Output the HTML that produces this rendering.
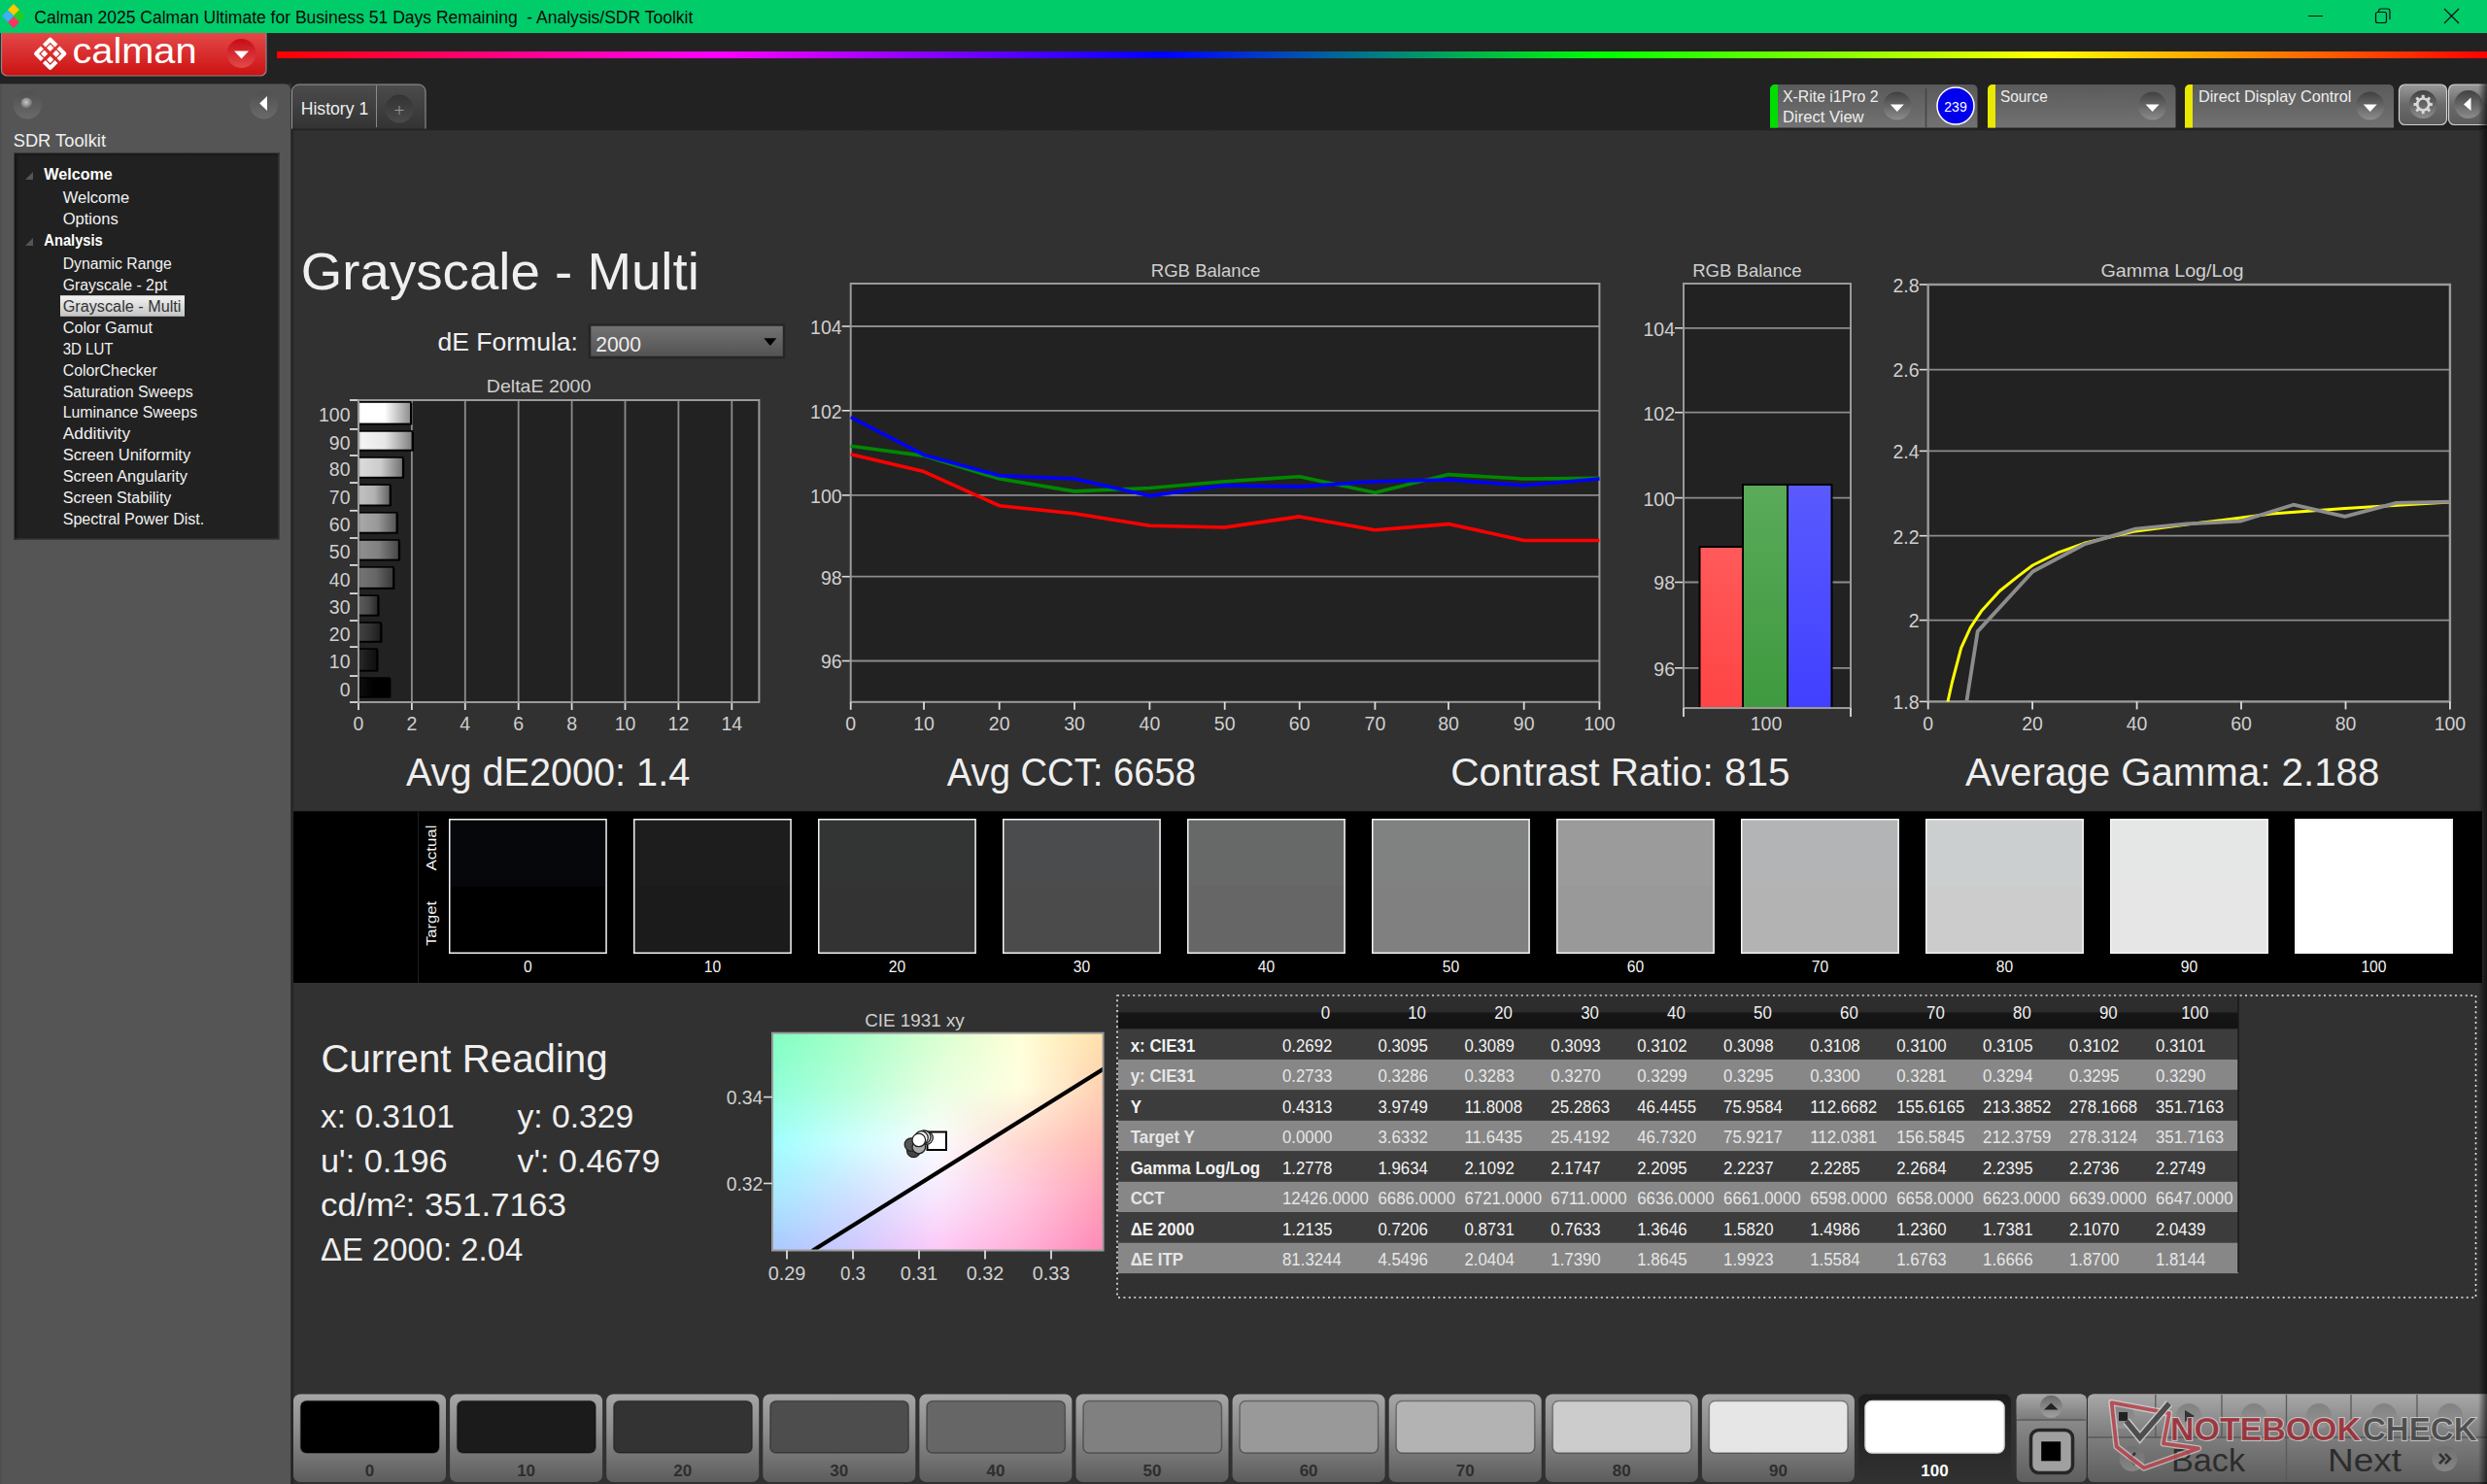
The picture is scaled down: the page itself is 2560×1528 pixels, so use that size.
<!DOCTYPE html>
<html><head><meta charset="utf-8"><title>Calman</title>
<style>html,body{margin:0;padding:0;background:#313131;overflow:hidden;width:2560px;height:1528px}
svg{display:block} text{font-family:"Liberation Sans", sans-serif}</style></head><body>
<svg width="2560" height="1528" viewBox="0 0 2560 1528">
<defs><linearGradient id="gRed" x1="0" y1="0" x2="0" y2="1"><stop offset="0" stop-color="#e44848"/><stop offset="1" stop-color="#cc1212"/></linearGradient><linearGradient id="gRedC" x1="0" y1="0" x2="0" y2="1"><stop offset="0" stop-color="#c60c18"/><stop offset="1" stop-color="#e24a4a"/></linearGradient><linearGradient id="gRain" gradientUnits="userSpaceOnUse" x1="285" y1="0" x2="2560" y2="0"><stop offset="0" stop-color="#ff0000"/><stop offset="0.2" stop-color="#ff00ff"/><stop offset="0.4" stop-color="#0000ff"/><stop offset="0.6" stop-color="#00ff00"/><stop offset="0.8" stop-color="#ffff00"/><stop offset="1" stop-color="#ff0000"/></linearGradient><linearGradient id="gTb" x1="0" y1="0" x2="0" y2="1"><stop offset="0" stop-color="#5a5a5a"/><stop offset="1" stop-color="#727272"/></linearGradient><radialGradient id="gDd" cx="0.5" cy="0.5" r="0.5"><stop offset="0" stop-color="#5c5c5c"/><stop offset="1" stop-color="#636363"/></radialGradient><linearGradient id="gDdc" x1="0" y1="0" x2="0" y2="1"><stop offset="0" stop-color="#404040"/><stop offset="1" stop-color="#8c8c8c"/></linearGradient><linearGradient id="gBtn" x1="0" y1="0" x2="0" y2="1"><stop offset="0" stop-color="#9a9a9a"/><stop offset="0.5" stop-color="#6a6a6a"/><stop offset="1" stop-color="#5a5a5a"/></linearGradient><radialGradient id="gBall" cx="0.45" cy="0.4" r="0.6"><stop offset="0" stop-color="#c8c8c8"/><stop offset="0.6" stop-color="#8a8a8a"/><stop offset="1" stop-color="#555"/></radialGradient><linearGradient id="gCirc" x1="0" y1="0" x2="0" y2="1"><stop offset="0" stop-color="#505050"/><stop offset="1" stop-color="#6a6a6a"/></linearGradient><linearGradient id="gTreeL" x1="0" y1="0" x2="1" y2="0"><stop offset="0" stop-color="#111"/><stop offset="1" stop-color="#212121"/></linearGradient><linearGradient id="gTreeT" x1="0" y1="0" x2="0" y2="1"><stop offset="0" stop-color="#111"/><stop offset="1" stop-color="#212121" stop-opacity="0"/></linearGradient><linearGradient id="gSel" x1="0" y1="0" x2="0" y2="1"><stop offset="0" stop-color="#f4f4f4"/><stop offset="1" stop-color="#c4c4c4"/></linearGradient><linearGradient id="gTab" x1="0" y1="0" x2="0" y2="1"><stop offset="0" stop-color="#4c4c4c"/><stop offset="1" stop-color="#333"/></linearGradient><linearGradient id="gPlus" x1="0" y1="0" x2="0" y2="1"><stop offset="0" stop-color="#333"/><stop offset="1" stop-color="#4a4a4a"/></linearGradient><linearGradient id="gShL" x1="0" y1="0" x2="1" y2="0"><stop offset="0" stop-color="#1e1e1e"/><stop offset="1" stop-color="#313131" stop-opacity="0"/></linearGradient><linearGradient id="gShT" x1="0" y1="0" x2="0" y2="1"><stop offset="0" stop-color="#1e1e1e"/><stop offset="1" stop-color="#313131" stop-opacity="0"/></linearGradient><linearGradient id="gRs" x1="0" y1="0" x2="1" y2="0"><stop offset="0" stop-color="#000" stop-opacity="0"/><stop offset="1" stop-color="#000" stop-opacity="0.62"/></linearGradient><linearGradient id="gDrop" x1="0" y1="0" x2="0" y2="1"><stop offset="0" stop-color="#737373"/><stop offset="1" stop-color="#525252"/></linearGradient><linearGradient id="gDb0" x1="0" y1="0" x2="1" y2="0"><stop offset="0" stop-color="rgb(0,0,0)"/><stop offset="0.06" stop-color="rgb(14,14,14)"/><stop offset="0.5" stop-color="rgb(0,0,0)"/><stop offset="1" stop-color="rgb(0,0,0)"/></linearGradient><linearGradient id="gDb10" x1="0" y1="0" x2="1" y2="0"><stop offset="0" stop-color="rgb(1,1,1)"/><stop offset="0.06" stop-color="rgb(40,40,40)"/><stop offset="0.5" stop-color="rgb(26,26,26)"/><stop offset="1" stop-color="rgb(14,14,14)"/></linearGradient><linearGradient id="gDb20" x1="0" y1="0" x2="1" y2="0"><stop offset="0" stop-color="rgb(26,26,26)"/><stop offset="0.06" stop-color="rgb(65,65,65)"/><stop offset="0.5" stop-color="rgb(51,51,51)"/><stop offset="1" stop-color="rgb(28,28,28)"/></linearGradient><linearGradient id="gDb30" x1="0" y1="0" x2="1" y2="0"><stop offset="0" stop-color="rgb(51,51,51)"/><stop offset="0.06" stop-color="rgb(90,90,90)"/><stop offset="0.5" stop-color="rgb(76,76,76)"/><stop offset="1" stop-color="rgb(41,41,41)"/></linearGradient><linearGradient id="gDb40" x1="0" y1="0" x2="1" y2="0"><stop offset="0" stop-color="rgb(77,77,77)"/><stop offset="0.06" stop-color="rgb(116,116,116)"/><stop offset="0.5" stop-color="rgb(102,102,102)"/><stop offset="1" stop-color="rgb(56,56,56)"/></linearGradient><linearGradient id="gDb50" x1="0" y1="0" x2="1" y2="0"><stop offset="0" stop-color="rgb(103,103,103)"/><stop offset="0.06" stop-color="rgb(142,142,142)"/><stop offset="0.5" stop-color="rgb(128,128,128)"/><stop offset="1" stop-color="rgb(70,70,70)"/></linearGradient><linearGradient id="gDb60" x1="0" y1="0" x2="1" y2="0"><stop offset="0" stop-color="rgb(128,128,128)"/><stop offset="0.06" stop-color="rgb(167,167,167)"/><stop offset="0.5" stop-color="rgb(153,153,153)"/><stop offset="1" stop-color="rgb(84,84,84)"/></linearGradient><linearGradient id="gDb70" x1="0" y1="0" x2="1" y2="0"><stop offset="0" stop-color="rgb(153,153,153)"/><stop offset="0.06" stop-color="rgb(192,192,192)"/><stop offset="0.5" stop-color="rgb(178,178,178)"/><stop offset="1" stop-color="rgb(97,97,97)"/></linearGradient><linearGradient id="gDb80" x1="0" y1="0" x2="1" y2="0"><stop offset="0" stop-color="rgb(179,179,179)"/><stop offset="0.06" stop-color="rgb(218,218,218)"/><stop offset="0.5" stop-color="rgb(204,204,204)"/><stop offset="1" stop-color="rgb(112,112,112)"/></linearGradient><linearGradient id="gDb90" x1="0" y1="0" x2="1" y2="0"><stop offset="0" stop-color="rgb(205,205,205)"/><stop offset="0.06" stop-color="rgb(244,244,244)"/><stop offset="0.5" stop-color="rgb(230,230,230)"/><stop offset="1" stop-color="rgb(126,126,126)"/></linearGradient><linearGradient id="gDb100" x1="0" y1="0" x2="1" y2="0"><stop offset="0" stop-color="rgb(230,230,230)"/><stop offset="0.06" stop-color="rgb(255,255,255)"/><stop offset="0.5" stop-color="rgb(255,255,255)"/><stop offset="1" stop-color="rgb(140,140,140)"/></linearGradient><linearGradient id="gMr" x1="0" y1="0" x2="0" y2="1"><stop offset="0" stop-color="#ff5a5a"/><stop offset="1" stop-color="#ff4444"/></linearGradient><linearGradient id="gMg" x1="0" y1="0" x2="0" y2="1"><stop offset="0" stop-color="#5aaa5a"/><stop offset="1" stop-color="#3e9a3e"/></linearGradient><linearGradient id="gMb" x1="0" y1="0" x2="0" y2="1"><stop offset="0" stop-color="#5a5aff"/><stop offset="1" stop-color="#4040ff"/></linearGradient><filter id="fBlur" x="-5%" y="-5%" width="110%" height="110%"><feGaussianBlur stdDeviation="5"/></filter><linearGradient id="gHdr" x1="0" y1="0" x2="0" y2="1"><stop offset="0" stop-color="#2e2e2e"/><stop offset="0.49" stop-color="#2c2c2c"/><stop offset="0.5" stop-color="#161616"/><stop offset="1" stop-color="#121212"/></linearGradient><linearGradient id="gBb" x1="0" y1="0" x2="0" y2="1"><stop offset="0" stop-color="#a6a6a6"/><stop offset="0.45" stop-color="#8a8a8a"/><stop offset="1" stop-color="#5c5c5c"/></linearGradient><linearGradient id="gSelB" x1="0" y1="0" x2="0" y2="1"><stop offset="0" stop-color="#1c1c1c"/><stop offset="1" stop-color="#313131"/></linearGradient><linearGradient id="gCb" x1="0" y1="0" x2="0" y2="1"><stop offset="0" stop-color="#a8a8a8"/><stop offset="1" stop-color="#7a7a7a"/></linearGradient><linearGradient id="gCb2" x1="0" y1="0" x2="0" y2="1"><stop offset="0" stop-color="#9c9c9c"/><stop offset="1" stop-color="#5e5e5e"/></linearGradient><linearGradient id="gIc" x1="0" y1="0" x2="0" y2="1"><stop offset="0" stop-color="#6a6a6a"/><stop offset="1" stop-color="#a0a0a0"/></linearGradient></defs>
<rect x="0" y="0" width="2560" height="1528" fill="#313131"/>
<rect x="0" y="0" width="2560" height="34" fill="#00cc6a"/>
<rect x="0" y="34" width="2560" height="52" fill="#222222"/>
<rect x="300" y="86" width="2260" height="47" fill="#222222"/>
<path d="M14 4 L20 10 L14 16 L8 10 Z" fill="#ffc800"/>
<path d="M8 10.5 L14 16.5 L8 22.5 L2 16.5 Z" fill="#3ab0ff"/>
<path d="M20 10.5 L26 16.5 L20 22.5 L14 16.5 Z" fill="#22cc22"/>
<path d="M14 17 L20 23 L14 29 L8 23 Z" fill="#ff3366"/>
<text x="35.3" y="23.8" font-size="17.5" fill="#0a0a0a" textLength="678.0" lengthAdjust="spacingAndGlyphs" xml:space="preserve">Calman 2025 Calman Ultimate for Business 51 Days Remaining  - Analysis/SDR Toolkit</text>
<line x1="2376" y1="16.5" x2="2391" y2="16.5" stroke="#111" stroke-width="1"/>
<rect x="2445.5" y="12.5" width="11" height="11" rx="2" fill="none" stroke="#111" stroke-width="1.2"/>
<path d="M2448.5 12.5 V11.5 a2.5 2.5 0 0 1 2.5 -2.5 H2457.5 a2.5 2.5 0 0 1 2.5 2.5 V20" fill="none" stroke="#111" stroke-width="1.2"/>
<path d="M2516 9 L2531 24 M2531 9 L2516 24" stroke="#111" stroke-width="1.2"/>
<path d="M1.5 34 H274 V72 a6 6 0 0 1 -6 6 H7.5 a6 6 0 0 1 -6 -6 Z" fill="url(#gRed)"/>
<path d="M1.5 34 V72 a6 6 0 0 0 6 6 H268 a6 6 0 0 0 6 -6 V34" fill="none" stroke="#8a8a8a" stroke-width="1.2"/>
<g transform="translate(51.7,55.3) rotate(45)"><path d="M-1.40 -10.30 L-10.30 -10.30 L-10.30 -1.40 M1.40 -10.30 L10.30 -10.30 L10.30 -1.40 M1.40 10.30 L10.30 10.30 L10.30 1.40 M-1.40 10.30 L-10.30 10.30 L-10.30 1.40" fill="none" stroke="#fff" stroke-width="4.2" stroke-linecap="butt" stroke-linejoin="round"/><g fill="#fff"><rect x="-6.9" y="-6.9" width="5.2" height="5.2" rx="0.6"/><rect x="1.7" y="-6.9" width="5.2" height="5.2" rx="0.6"/><rect x="-6.9" y="1.7" width="5.2" height="5.2" rx="0.6"/><rect x="1.7" y="1.7" width="5.2" height="5.2" rx="0.6"/></g></g>
<text x="74.5" y="65.3" font-size="37" fill="#fff" textLength="128.0" lengthAdjust="spacingAndGlyphs">calman</text>
<circle cx="248.5" cy="55" r="15" fill="url(#gRedC)"/>
<path d="M241 52.5 L256 52.5 L248.5 60.5 Z" fill="#fff"/>
<rect x="285" y="53" width="2275" height="7" fill="url(#gRain)"/>
<path d="M1822 131.5 V92 a5 5 0 0 1 5 -5 H2030.5 a5 5 0 0 1 5 5 V131.5 Z" fill="url(#gTb)"/>
<path d="M1822 131.5 V92 a5 5 0 0 1 5 -5 H1830 V131.5 Z" fill="#00dd00"/>
<text x="1835.0" y="104.8" font-size="16.5" fill="#eee" textLength="98.5" lengthAdjust="spacingAndGlyphs">X-Rite i1Pro 2</text>
<text x="1835.0" y="126.2" font-size="16.5" fill="#eee" textLength="83.6" lengthAdjust="spacingAndGlyphs">Direct View</text>
<circle cx="1952.8" cy="109" r="14.5" fill="url(#gDdc)"/>
<path d="M1945.8 107.5 L1959.8 107.5 L1952.8 115 Z" fill="#fff"/>
<line x1="1982.5" y1="91" x2="1982.5" y2="131" stroke="#444" stroke-width="1.5"/>
<circle cx="2013" cy="109" r="19" fill="#0000ee" stroke="#fff" stroke-width="1.5"/>
<text x="2013.0" y="114.8" font-size="14" fill="#fff" text-anchor="middle">239</text>
<path d="M2046 131.5 V92 a5 5 0 0 1 5 -5 H2234.5 a5 5 0 0 1 5 5 V131.5 Z" fill="url(#gTb)"/>
<path d="M2046 131.5 V92 a5 5 0 0 1 5 -5 H2054 V131.5 Z" fill="#e8e800"/>
<text x="2058.9" y="104.8" font-size="16.5" fill="#eee" textLength="48.9" lengthAdjust="spacingAndGlyphs">Source</text>
<circle cx="2215.6" cy="109" r="14.5" fill="url(#gDdc)"/>
<path d="M2208.6 107.5 L2222.6 107.5 L2215.6 115 Z" fill="#fff"/>
<path d="M2249 131.5 V92 a5 5 0 0 1 5 -5 H2459 a5 5 0 0 1 5 5 V131.5 Z" fill="url(#gTb)"/>
<path d="M2249 131.5 V92 a5 5 0 0 1 5 -5 H2257 V131.5 Z" fill="#e8e800"/>
<text x="2263.0" y="104.8" font-size="16.5" fill="#eee" textLength="157.4" lengthAdjust="spacingAndGlyphs">Direct Display Control</text>
<circle cx="2439.7" cy="109" r="14.5" fill="url(#gDdc)"/>
<path d="M2432.7 107.5 L2446.7 107.5 L2439.7 115 Z" fill="#fff"/>
<rect x="2469.5" y="87" width="49" height="41.5" rx="6" fill="url(#gBtn)" stroke="#d0d0d0" stroke-width="1.2"/>
<circle cx="2494.2" cy="107.5" r="14.5" fill="url(#gDdc)"/>
<g transform="translate(2494.2,107.5)" fill="#d8d8d8"><rect x="-1.5" y="-9.8" width="3" height="4" rx="0.8" transform="rotate(0)"/><rect x="-1.5" y="-9.8" width="3" height="4" rx="0.8" transform="rotate(45)"/><rect x="-1.5" y="-9.8" width="3" height="4" rx="0.8" transform="rotate(90)"/><rect x="-1.5" y="-9.8" width="3" height="4" rx="0.8" transform="rotate(135)"/><rect x="-1.5" y="-9.8" width="3" height="4" rx="0.8" transform="rotate(180)"/><rect x="-1.5" y="-9.8" width="3" height="4" rx="0.8" transform="rotate(225)"/><rect x="-1.5" y="-9.8" width="3" height="4" rx="0.8" transform="rotate(270)"/><rect x="-1.5" y="-9.8" width="3" height="4" rx="0.8" transform="rotate(315)"/><circle r="6.0" fill="none" stroke="#d8d8d8" stroke-width="2.7"/></g>
<rect x="2520.5" y="87" width="55" height="41.5" rx="6" fill="url(#gBtn)" stroke="#d0d0d0" stroke-width="1.2"/>
<circle cx="2540.8" cy="107.5" r="14.5" fill="url(#gDdc)"/>
<path d="M2536 107.5 L2543.5 100.5 L2543.5 114 Z" fill="#fff"/>
<path d="M0 1528 V86.5 H293 a6 6 0 0 1 6 6 V1528 Z" fill="#555555"/>
<line x1="1" y1="87" x2="1" y2="1528" stroke="#4a4a4a" stroke-width="1"/>
<circle cx="28.3" cy="108" r="14.5" fill="url(#gCirc)"/>
<circle cx="27.5" cy="106.5" r="6" fill="url(#gBall)"/>
<circle cx="271.6" cy="108" r="14.5" fill="url(#gCirc)"/>
<path d="M267.2 106.5 L275 99 L275 114 Z" fill="#fff"/>
<text x="13.7" y="151.1" font-size="18.2" fill="#f0f0f0" textLength="95.3" lengthAdjust="spacingAndGlyphs">SDR Toolkit</text>
<rect x="14" y="157" width="273.5" height="398.5" fill="#212121"/>
<rect x="14" y="157" width="6" height="398.5" fill="url(#gTreeL)"/>
<rect x="14" y="157" width="273.5" height="5" fill="url(#gTreeT)"/>
<rect x="14.5" y="157.5" width="272.5" height="397.5" fill="none" stroke="#3a3a3a" stroke-width="1"/>
<path d="M26 185 L34 185 L34 177 Z" fill="#555"/>
<path d="M26 253 L34 253 L34 245 Z" fill="#555"/>
<text x="45.3" y="185.1" font-size="16" fill="#fff" font-weight="bold" textLength="70.5" lengthAdjust="spacingAndGlyphs">Welcome</text>
<text x="64.7" y="209.0" font-size="16" fill="#f2f2f2" textLength="68.5" lengthAdjust="spacingAndGlyphs">Welcome</text>
<text x="64.7" y="231.0" font-size="16" fill="#f2f2f2" textLength="57.0" lengthAdjust="spacingAndGlyphs">Options</text>
<text x="45.3" y="253.0" font-size="16" fill="#fff" font-weight="bold" textLength="60.5" lengthAdjust="spacingAndGlyphs">Analysis</text>
<text x="64.7" y="277.2" font-size="16" fill="#f2f2f2" textLength="112.1" lengthAdjust="spacingAndGlyphs">Dynamic Range</text>
<text x="64.7" y="299.1" font-size="16" fill="#f2f2f2" textLength="107.4" lengthAdjust="spacingAndGlyphs">Grayscale - 2pt</text>
<rect x="62" y="304.2" width="128" height="21.6" fill="url(#gSel)"/>
<text x="64.7" y="321.0" font-size="16" fill="#333" textLength="121.8" lengthAdjust="spacingAndGlyphs">Grayscale - Multi</text>
<text x="64.7" y="342.8" font-size="16" fill="#f2f2f2" textLength="92.3" lengthAdjust="spacingAndGlyphs">Color Gamut</text>
<text x="64.7" y="364.7" font-size="16" fill="#f2f2f2" textLength="51.8" lengthAdjust="spacingAndGlyphs">3D LUT</text>
<text x="64.7" y="386.6" font-size="16" fill="#f2f2f2" textLength="97.0" lengthAdjust="spacingAndGlyphs">ColorChecker</text>
<text x="64.7" y="408.5" font-size="16" fill="#f2f2f2" textLength="134.1" lengthAdjust="spacingAndGlyphs">Saturation Sweeps</text>
<text x="64.7" y="430.4" font-size="16" fill="#f2f2f2" textLength="138.4" lengthAdjust="spacingAndGlyphs">Luminance Sweeps</text>
<text x="64.7" y="452.2" font-size="16" fill="#f2f2f2" textLength="69.4" lengthAdjust="spacingAndGlyphs">Additivity</text>
<text x="64.7" y="474.1" font-size="16" fill="#f2f2f2" textLength="131.5" lengthAdjust="spacingAndGlyphs">Screen Uniformity</text>
<text x="64.7" y="496.0" font-size="16" fill="#f2f2f2" textLength="128.3" lengthAdjust="spacingAndGlyphs">Screen Angularity</text>
<text x="64.7" y="517.9" font-size="16" fill="#f2f2f2" textLength="111.7" lengthAdjust="spacingAndGlyphs">Screen Stability</text>
<text x="64.7" y="539.8" font-size="16" fill="#f2f2f2" textLength="145.6" lengthAdjust="spacingAndGlyphs">Spectral Power Dist.</text>
<path d="M300.5 132.5 V94 a7 7 0 0 1 7 -7 H431 a7 7 0 0 1 7 7 V132.5 Z" fill="url(#gTab)"/>
<path d="M300.5 132.5 V94 a7 7 0 0 1 7 -7 H431 a7 7 0 0 1 7 7 V132.5" fill="none" stroke="#9a9a9a" stroke-width="1"/>
<line x1="387.5" y1="88" x2="387.5" y2="131" stroke="#8a8a8a" stroke-width="1"/>
<circle cx="411" cy="112" r="14.5" fill="url(#gPlus)"/>
<path d="M406.5 113.5 H415.5 M411 109 V118" stroke="#999" stroke-width="1"/>
<text x="309.7" y="117.9" font-size="18" fill="#eee" textLength="69.5" lengthAdjust="spacingAndGlyphs">History 1</text>
<rect x="300" y="133" width="2255" height="1395" fill="#313131"/>
<rect x="300" y="133" width="4" height="1395" fill="url(#gShL)"/>
<rect x="300" y="133" width="2255" height="3" fill="url(#gShT)"/>
<text x="309.8" y="298.0" font-size="52.8" fill="#efefef" textLength="410.0" lengthAdjust="spacingAndGlyphs">Grayscale - Multi</text>
<text x="450.4" y="360.8" font-size="25.8" fill="#f0f0f0" textLength="144.6" lengthAdjust="spacingAndGlyphs">dE Formula:</text>
<rect x="607" y="334.5" width="200" height="33.5" fill="url(#gDrop)" stroke="#262626" stroke-width="2.5"/>
<text x="613.2" y="361.7" font-size="21.3" fill="#eee" textLength="46.8" lengthAdjust="spacingAndGlyphs">2000</text>
<path d="M786.3 348.2 L799.3 348.2 L792.8 356 Z" fill="#000"/>
<text x="554.6" y="404.0" font-size="19" fill="#cfcfcf" text-anchor="middle" textLength="107.5" lengthAdjust="spacingAndGlyphs">DeltaE 2000</text>
<rect x="369" y="412" width="412.4" height="311" fill="#222222"/>
<line x1="423.9" y1="412" x2="423.9" y2="723" stroke="#8c8c8c" stroke-width="1.8"/>
<line x1="478.8" y1="412" x2="478.8" y2="723" stroke="#8c8c8c" stroke-width="1.8"/>
<line x1="533.7" y1="412" x2="533.7" y2="723" stroke="#8c8c8c" stroke-width="1.8"/>
<line x1="588.6" y1="412" x2="588.6" y2="723" stroke="#8c8c8c" stroke-width="1.8"/>
<line x1="643.5" y1="412" x2="643.5" y2="723" stroke="#8c8c8c" stroke-width="1.8"/>
<line x1="698.4" y1="412" x2="698.4" y2="723" stroke="#8c8c8c" stroke-width="1.8"/>
<line x1="753.3" y1="412" x2="753.3" y2="723" stroke="#8c8c8c" stroke-width="1.8"/>
<line x1="369.0" y1="723" x2="369.0" y2="731" stroke="#dcdcdc" stroke-width="1.8"/>
<text x="369.0" y="751.8" font-size="19.5" fill="#cfcfcf" text-anchor="middle">0</text>
<line x1="423.9" y1="723" x2="423.9" y2="731" stroke="#dcdcdc" stroke-width="1.8"/>
<text x="423.9" y="751.8" font-size="19.5" fill="#cfcfcf" text-anchor="middle">2</text>
<line x1="478.8" y1="723" x2="478.8" y2="731" stroke="#dcdcdc" stroke-width="1.8"/>
<text x="478.8" y="751.8" font-size="19.5" fill="#cfcfcf" text-anchor="middle">4</text>
<line x1="533.7" y1="723" x2="533.7" y2="731" stroke="#dcdcdc" stroke-width="1.8"/>
<text x="533.7" y="751.8" font-size="19.5" fill="#cfcfcf" text-anchor="middle">6</text>
<line x1="588.6" y1="723" x2="588.6" y2="731" stroke="#dcdcdc" stroke-width="1.8"/>
<text x="588.6" y="751.8" font-size="19.5" fill="#cfcfcf" text-anchor="middle">8</text>
<line x1="643.5" y1="723" x2="643.5" y2="731" stroke="#dcdcdc" stroke-width="1.8"/>
<text x="643.5" y="751.8" font-size="19.5" fill="#cfcfcf" text-anchor="middle">10</text>
<line x1="698.4" y1="723" x2="698.4" y2="731" stroke="#dcdcdc" stroke-width="1.8"/>
<text x="698.4" y="751.8" font-size="19.5" fill="#cfcfcf" text-anchor="middle">12</text>
<line x1="753.3" y1="723" x2="753.3" y2="731" stroke="#dcdcdc" stroke-width="1.8"/>
<text x="753.3" y="751.8" font-size="19.5" fill="#cfcfcf" text-anchor="middle">14</text>
<line x1="360" y1="412.0" x2="369" y2="412.0" stroke="#dcdcdc" stroke-width="1.8"/>
<line x1="360" y1="441.9" x2="369" y2="441.9" stroke="#dcdcdc" stroke-width="1.8"/>
<line x1="360" y1="469.0" x2="369" y2="469.0" stroke="#dcdcdc" stroke-width="1.8"/>
<line x1="360" y1="497.1" x2="369" y2="497.1" stroke="#dcdcdc" stroke-width="1.8"/>
<line x1="360" y1="525.8" x2="369" y2="525.8" stroke="#dcdcdc" stroke-width="1.8"/>
<line x1="360" y1="554.0" x2="369" y2="554.0" stroke="#dcdcdc" stroke-width="1.8"/>
<line x1="360" y1="581.9" x2="369" y2="581.9" stroke="#dcdcdc" stroke-width="1.8"/>
<line x1="360" y1="611.1" x2="369" y2="611.1" stroke="#dcdcdc" stroke-width="1.8"/>
<line x1="360" y1="639.0" x2="369" y2="639.0" stroke="#dcdcdc" stroke-width="1.8"/>
<line x1="360" y1="666.1" x2="369" y2="666.1" stroke="#dcdcdc" stroke-width="1.8"/>
<line x1="360" y1="696.0" x2="369" y2="696.0" stroke="#dcdcdc" stroke-width="1.8"/>
<line x1="360" y1="723.0" x2="369" y2="723.0" stroke="#dcdcdc" stroke-width="1.8"/>
<text x="360.5" y="716.7" font-size="19.5" fill="#cfcfcf" text-anchor="end">0</text>
<rect x="370.5" y="699.0" width="31.9" height="19.5" fill="#000"/>
<rect x="369" y="698.0" width="31.9" height="19.5" fill="url(#gDb0)" stroke="#000" stroke-width="1.6"/>
<text x="360.5" y="688.2" font-size="19.5" fill="#cfcfcf" text-anchor="end">10</text>
<rect x="370.5" y="669.1" width="19.0" height="22.4" fill="#000"/>
<rect x="369" y="668.1" width="19.0" height="22.4" fill="url(#gDb10)" stroke="#000" stroke-width="1.6"/>
<text x="360.5" y="659.8" font-size="19.5" fill="#cfcfcf" text-anchor="end">20</text>
<rect x="370.5" y="642.0" width="23.0" height="19.6" fill="#000"/>
<rect x="369" y="641.0" width="23.0" height="19.6" fill="url(#gDb20)" stroke="#000" stroke-width="1.6"/>
<text x="360.5" y="632.2" font-size="19.5" fill="#cfcfcf" text-anchor="end">30</text>
<rect x="370.5" y="614.1" width="20.1" height="20.4" fill="#000"/>
<rect x="369" y="613.1" width="20.1" height="20.4" fill="url(#gDb30)" stroke="#000" stroke-width="1.6"/>
<text x="360.5" y="603.7" font-size="19.5" fill="#cfcfcf" text-anchor="end">40</text>
<rect x="370.5" y="584.9" width="35.9" height="21.7" fill="#000"/>
<rect x="369" y="583.9" width="35.9" height="21.7" fill="url(#gDb40)" stroke="#000" stroke-width="1.6"/>
<text x="360.5" y="575.2" font-size="19.5" fill="#cfcfcf" text-anchor="end">50</text>
<rect x="370.5" y="557.0" width="41.6" height="20.4" fill="#000"/>
<rect x="369" y="556.0" width="41.6" height="20.4" fill="url(#gDb50)" stroke="#000" stroke-width="1.6"/>
<text x="360.5" y="547.1" font-size="19.5" fill="#cfcfcf" text-anchor="end">60</text>
<rect x="370.5" y="528.8" width="39.4" height="20.7" fill="#000"/>
<rect x="369" y="527.8" width="39.4" height="20.7" fill="url(#gDb60)" stroke="#000" stroke-width="1.6"/>
<text x="360.5" y="518.6" font-size="19.5" fill="#cfcfcf" text-anchor="end">70</text>
<rect x="370.5" y="500.1" width="32.5" height="21.2" fill="#000"/>
<rect x="369" y="499.1" width="32.5" height="21.2" fill="url(#gDb70)" stroke="#000" stroke-width="1.6"/>
<text x="360.5" y="490.2" font-size="19.5" fill="#cfcfcf" text-anchor="end">80</text>
<rect x="370.5" y="472.0" width="45.7" height="20.6" fill="#000"/>
<rect x="369" y="471.0" width="45.7" height="20.6" fill="url(#gDb80)" stroke="#000" stroke-width="1.6"/>
<text x="360.5" y="462.6" font-size="19.5" fill="#cfcfcf" text-anchor="end">90</text>
<rect x="370.5" y="444.9" width="55.4" height="19.6" fill="#000"/>
<rect x="369" y="443.9" width="55.4" height="19.6" fill="url(#gDb90)" stroke="#000" stroke-width="1.6"/>
<text x="360.5" y="434.1" font-size="19.5" fill="#cfcfcf" text-anchor="end">100</text>
<rect x="370.5" y="415.0" width="53.8" height="22.4" fill="#000"/>
<rect x="369" y="414.0" width="53.8" height="22.4" fill="url(#gDb100)" stroke="#000" stroke-width="1.6"/>
<line x1="369" y1="412" x2="369" y2="723" stroke="#9a9a9a" stroke-width="2"/>
<rect x="369" y="412" width="412.4" height="311" fill="none" stroke="#9a9a9a" stroke-width="2"/>
<text x="1241.0" y="285.3" font-size="19" fill="#cfcfcf" text-anchor="middle" textLength="112.5" lengthAdjust="spacingAndGlyphs">RGB Balance</text>
<rect x="875.7" y="292" width="770.7" height="430.79999999999995" fill="#222222"/>
<line x1="875.7" y1="336.0" x2="1646.4" y2="336.0" stroke="#8c8c8c" stroke-width="1.8"/>
<line x1="866.7" y1="336.0" x2="875.7" y2="336.0" stroke="#dcdcdc" stroke-width="1.6"/>
<text x="866.6" y="343.9" font-size="19.5" fill="#cfcfcf" text-anchor="end">104</text>
<line x1="875.7" y1="422.8" x2="1646.4" y2="422.8" stroke="#8c8c8c" stroke-width="1.8"/>
<line x1="866.7" y1="422.8" x2="875.7" y2="422.8" stroke="#dcdcdc" stroke-width="1.6"/>
<text x="866.6" y="430.7" font-size="19.5" fill="#cfcfcf" text-anchor="end">102</text>
<line x1="875.7" y1="509.9" x2="1646.4" y2="509.9" stroke="#8c8c8c" stroke-width="1.8"/>
<line x1="866.7" y1="509.9" x2="875.7" y2="509.9" stroke="#dcdcdc" stroke-width="1.6"/>
<text x="866.6" y="517.8" font-size="19.5" fill="#cfcfcf" text-anchor="end">100</text>
<line x1="875.7" y1="593.7" x2="1646.4" y2="593.7" stroke="#8c8c8c" stroke-width="1.8"/>
<line x1="866.7" y1="593.7" x2="875.7" y2="593.7" stroke="#dcdcdc" stroke-width="1.6"/>
<text x="866.6" y="601.6" font-size="19.5" fill="#cfcfcf" text-anchor="end">98</text>
<line x1="875.7" y1="680.5" x2="1646.4" y2="680.5" stroke="#8c8c8c" stroke-width="1.8"/>
<line x1="866.7" y1="680.5" x2="875.7" y2="680.5" stroke="#dcdcdc" stroke-width="1.6"/>
<text x="866.6" y="688.4" font-size="19.5" fill="#cfcfcf" text-anchor="end">96</text>
<rect x="875.7" y="292" width="770.7" height="430.8" fill="none" stroke="#9a9a9a" stroke-width="2"/>
<line x1="875.7" y1="722.8" x2="875.7" y2="730.8" stroke="#dcdcdc" stroke-width="1.8"/>
<text x="875.7" y="751.8" font-size="19.5" fill="#cfcfcf" text-anchor="middle">0</text>
<line x1="951.0" y1="722.8" x2="951.0" y2="730.8" stroke="#dcdcdc" stroke-width="1.8"/>
<text x="951.0" y="751.8" font-size="19.5" fill="#cfcfcf" text-anchor="middle">10</text>
<line x1="1028.7" y1="722.8" x2="1028.7" y2="730.8" stroke="#dcdcdc" stroke-width="1.8"/>
<text x="1028.7" y="751.8" font-size="19.5" fill="#cfcfcf" text-anchor="middle">20</text>
<line x1="1106.0" y1="722.8" x2="1106.0" y2="730.8" stroke="#dcdcdc" stroke-width="1.8"/>
<text x="1106.0" y="751.8" font-size="19.5" fill="#cfcfcf" text-anchor="middle">30</text>
<line x1="1183.4" y1="722.8" x2="1183.4" y2="730.8" stroke="#dcdcdc" stroke-width="1.8"/>
<text x="1183.4" y="751.8" font-size="19.5" fill="#cfcfcf" text-anchor="middle">40</text>
<line x1="1260.7" y1="722.8" x2="1260.7" y2="730.8" stroke="#dcdcdc" stroke-width="1.8"/>
<text x="1260.7" y="751.8" font-size="19.5" fill="#cfcfcf" text-anchor="middle">50</text>
<line x1="1337.7" y1="722.8" x2="1337.7" y2="730.8" stroke="#dcdcdc" stroke-width="1.8"/>
<text x="1337.7" y="751.8" font-size="19.5" fill="#cfcfcf" text-anchor="middle">60</text>
<line x1="1415.4" y1="722.8" x2="1415.4" y2="730.8" stroke="#dcdcdc" stroke-width="1.8"/>
<text x="1415.4" y="751.8" font-size="19.5" fill="#cfcfcf" text-anchor="middle">70</text>
<line x1="1491.0" y1="722.8" x2="1491.0" y2="730.8" stroke="#dcdcdc" stroke-width="1.8"/>
<text x="1491.0" y="751.8" font-size="19.5" fill="#cfcfcf" text-anchor="middle">80</text>
<line x1="1568.7" y1="722.8" x2="1568.7" y2="730.8" stroke="#dcdcdc" stroke-width="1.8"/>
<text x="1568.7" y="751.8" font-size="19.5" fill="#cfcfcf" text-anchor="middle">90</text>
<line x1="1646.4" y1="722.8" x2="1646.4" y2="730.8" stroke="#dcdcdc" stroke-width="1.8"/>
<text x="1646.4" y="751.8" font-size="19.5" fill="#cfcfcf" text-anchor="middle">100</text>
<polyline points="875.7,467.7 951.0,485.6 1028.7,520.7 1106.0,528.8 1183.4,541.3 1260.7,543.0 1337.7,531.9 1415.4,545.7 1491.0,539.6 1568.7,556.5 1646.4,556.5" fill="none" stroke="#ff0000" stroke-width="3.6" stroke-linejoin="round"/>
<polyline points="875.7,459.3 951.0,469.4 1028.7,493.0 1106.0,505.9 1183.4,502.5 1260.7,495.7 1337.7,490.7 1415.4,507.2 1491.0,488.6 1568.7,493.0 1646.4,492.4" fill="none" stroke="#008800" stroke-width="3.6" stroke-linejoin="round"/>
<polyline points="875.7,429.5 951.0,468.4 1028.7,489.7 1106.0,493.0 1183.4,510.6 1260.7,499.8 1337.7,501.1 1415.4,495.7 1491.0,494.0 1568.7,499.8 1646.4,493.0" fill="none" stroke="#0000ff" stroke-width="3.6" stroke-linejoin="round"/>
<text x="1798.4" y="285.3" font-size="19" fill="#cfcfcf" text-anchor="middle" textLength="112.5" lengthAdjust="spacingAndGlyphs">RGB Balance</text>
<rect x="1733" y="292" width="172" height="437" fill="#222222"/>
<line x1="1733" y1="337.8" x2="1905" y2="337.8" stroke="#8c8c8c" stroke-width="1.8"/>
<line x1="1724" y1="337.8" x2="1733" y2="337.8" stroke="#dcdcdc" stroke-width="1.6"/>
<text x="1724.0" y="345.7" font-size="19.5" fill="#cfcfcf" text-anchor="end">104</text>
<line x1="1733" y1="424.7" x2="1905" y2="424.7" stroke="#8c8c8c" stroke-width="1.8"/>
<line x1="1724" y1="424.7" x2="1733" y2="424.7" stroke="#dcdcdc" stroke-width="1.6"/>
<text x="1724.0" y="432.6" font-size="19.5" fill="#cfcfcf" text-anchor="end">102</text>
<line x1="1733" y1="512.6" x2="1905" y2="512.6" stroke="#8c8c8c" stroke-width="1.8"/>
<line x1="1724" y1="512.6" x2="1733" y2="512.6" stroke="#dcdcdc" stroke-width="1.6"/>
<text x="1724.0" y="520.5" font-size="19.5" fill="#cfcfcf" text-anchor="end">100</text>
<line x1="1733" y1="599.5" x2="1905" y2="599.5" stroke="#8c8c8c" stroke-width="1.8"/>
<line x1="1724" y1="599.5" x2="1733" y2="599.5" stroke="#dcdcdc" stroke-width="1.6"/>
<text x="1724.0" y="607.4" font-size="19.5" fill="#cfcfcf" text-anchor="end">98</text>
<line x1="1733" y1="687.8" x2="1905" y2="687.8" stroke="#8c8c8c" stroke-width="1.8"/>
<line x1="1724" y1="687.8" x2="1733" y2="687.8" stroke="#dcdcdc" stroke-width="1.6"/>
<text x="1724.0" y="695.7" font-size="19.5" fill="#cfcfcf" text-anchor="end">96</text>
<rect x="1749.5" y="563" width="44.5" height="166" fill="url(#gMr)" stroke="#000" stroke-width="2"/>
<rect x="1794" y="499" width="46" height="230" fill="url(#gMg)" stroke="#000" stroke-width="2"/>
<rect x="1840" y="499" width="45.5" height="230" fill="url(#gMb)" stroke="#000" stroke-width="2"/>
<rect x="1733" y="292" width="172" height="437" fill="none" stroke="#9a9a9a" stroke-width="2"/>
<line x1="1733" y1="729" x2="1733" y2="738" stroke="#dcdcdc" stroke-width="1.8"/>
<line x1="1905" y1="729" x2="1905" y2="738" stroke="#dcdcdc" stroke-width="1.8"/>
<text x="1818.0" y="751.8" font-size="19.5" fill="#cfcfcf" text-anchor="middle">100</text>
<text x="2236.0" y="285.3" font-size="19" fill="#cfcfcf" text-anchor="middle" textLength="147.0" lengthAdjust="spacingAndGlyphs">Gamma Log/Log</text>
<rect x="1984.7" y="293" width="537.2" height="429.4" fill="#222222"/>
<line x1="1984.7" y1="380.6" x2="2521.9" y2="380.6" stroke="#8c8c8c" stroke-width="1.8"/>
<line x1="1984.7" y1="464.4" x2="2521.9" y2="464.4" stroke="#8c8c8c" stroke-width="1.8"/>
<line x1="1984.7" y1="551.7" x2="2521.9" y2="551.7" stroke="#8c8c8c" stroke-width="1.8"/>
<line x1="1984.7" y1="638.6" x2="2521.9" y2="638.6" stroke="#8c8c8c" stroke-width="1.8"/>
<line x1="1975.7" y1="293.0" x2="1984.7" y2="293.0" stroke="#dcdcdc" stroke-width="1.6"/>
<text x="1975.5" y="300.8" font-size="19.5" fill="#cfcfcf" text-anchor="end">2.8</text>
<line x1="1975.7" y1="380.6" x2="1984.7" y2="380.6" stroke="#dcdcdc" stroke-width="1.6"/>
<text x="1975.5" y="388.4" font-size="19.5" fill="#cfcfcf" text-anchor="end">2.6</text>
<line x1="1975.7" y1="464.4" x2="1984.7" y2="464.4" stroke="#dcdcdc" stroke-width="1.6"/>
<text x="1975.5" y="472.2" font-size="19.5" fill="#cfcfcf" text-anchor="end">2.4</text>
<line x1="1975.7" y1="551.7" x2="1984.7" y2="551.7" stroke="#dcdcdc" stroke-width="1.6"/>
<text x="1975.5" y="559.5" font-size="19.5" fill="#cfcfcf" text-anchor="end">2.2</text>
<line x1="1975.7" y1="638.6" x2="1984.7" y2="638.6" stroke="#dcdcdc" stroke-width="1.6"/>
<text x="1975.5" y="646.4" font-size="19.5" fill="#cfcfcf" text-anchor="end">2</text>
<line x1="1975.7" y1="722.4" x2="1984.7" y2="722.4" stroke="#dcdcdc" stroke-width="1.6"/>
<text x="1975.5" y="730.2" font-size="19.5" fill="#cfcfcf" text-anchor="end">1.8</text>
<rect x="1984.7" y="293" width="537.2" height="429.4" fill="none" stroke="#9a9a9a" stroke-width="2.4"/>
<line x1="1984.7" y1="722.4" x2="1984.7" y2="730.4" stroke="#dcdcdc" stroke-width="1.8"/>
<text x="1984.7" y="751.8" font-size="19.5" fill="#cfcfcf" text-anchor="middle">0</text>
<line x1="2092.1" y1="722.4" x2="2092.1" y2="730.4" stroke="#dcdcdc" stroke-width="1.8"/>
<text x="2092.1" y="751.8" font-size="19.5" fill="#cfcfcf" text-anchor="middle">20</text>
<line x1="2199.6" y1="722.4" x2="2199.6" y2="730.4" stroke="#dcdcdc" stroke-width="1.8"/>
<text x="2199.6" y="751.8" font-size="19.5" fill="#cfcfcf" text-anchor="middle">40</text>
<line x1="2307.0" y1="722.4" x2="2307.0" y2="730.4" stroke="#dcdcdc" stroke-width="1.8"/>
<text x="2307.0" y="751.8" font-size="19.5" fill="#cfcfcf" text-anchor="middle">60</text>
<line x1="2414.5" y1="722.4" x2="2414.5" y2="730.4" stroke="#dcdcdc" stroke-width="1.8"/>
<text x="2414.5" y="751.8" font-size="19.5" fill="#cfcfcf" text-anchor="middle">80</text>
<line x1="2521.9" y1="722.4" x2="2521.9" y2="730.4" stroke="#dcdcdc" stroke-width="1.8"/>
<text x="2521.9" y="751.8" font-size="19.5" fill="#cfcfcf" text-anchor="middle">100</text>
<clipPath id="cpG"><rect x="1984.7" y="293" width="537.2" height="429.4"/></clipPath>
<g clip-path="url(#cpG)"><polyline points="2002.5,731.3 2004.7,723.7 2009.3,703.0 2018.7,667.1 2028.2,646.3 2039.5,629.3 2058.4,608.5 2077.3,593.4 2092.4,582.0 2118.9,568.8 2145.3,559.3 2198.2,546.9 2262.5,538.6 2338.1,529.1 2413.7,523.4 2523.3,517.0" fill="none" stroke="#ffff00" stroke-width="3.0" stroke-linejoin="round"/><polyline points="2022.9,731.3 2035.7,650.1 2092.4,588.5 2145.3,560.5 2198.2,544.6 2251.1,539.3 2305.9,536.7 2360.7,519.7 2413.7,531.8 2466.6,517.8 2523.3,516.6" fill="none" stroke="#8c8c8c" stroke-width="3.8" stroke-linejoin="round"/></g>
<text x="417.9" y="809.2" font-size="39.8" fill="#efefef" textLength="292.3" lengthAdjust="spacingAndGlyphs">Avg dE2000: 1.4</text>
<text x="974.8" y="809.2" font-size="39.8" fill="#efefef" textLength="256.1" lengthAdjust="spacingAndGlyphs">Avg CCT: 6658</text>
<text x="1493.3" y="809.2" font-size="39.8" fill="#efefef" textLength="349.3" lengthAdjust="spacingAndGlyphs">Contrast Ratio: 815</text>
<text x="2022.9" y="809.2" font-size="39.8" fill="#efefef" textLength="426.4" lengthAdjust="spacingAndGlyphs">Average Gamma: 2.188</text>
<rect x="302" y="835.3" width="2253" height="176.7" fill="#000"/>
<line x1="430.5" y1="836" x2="430.5" y2="1012" stroke="#1e1e1e" stroke-width="1"/>
<rect x="462" y="843" width="162.8" height="70" fill="#05070b"/>
<rect x="462" y="913" width="162.8" height="69" fill="#000000"/>
<rect x="462.75" y="843.75" width="161.3" height="137.5" fill="none" stroke="#f4f4f4" stroke-width="1.5"/>
<text x="543.4" y="1001.4" font-size="15.6" fill="#f4f4f4" text-anchor="middle">0</text>
<rect x="652" y="843" width="162.8" height="70" fill="#1c1d1c"/>
<rect x="652" y="913" width="162.8" height="69" fill="#1b1b1b"/>
<rect x="652.75" y="843.75" width="161.3" height="137.5" fill="none" stroke="#f4f4f4" stroke-width="1.5"/>
<text x="733.4" y="1001.4" font-size="15.6" fill="#f4f4f4" text-anchor="middle">10</text>
<rect x="842" y="843" width="162.8" height="70" fill="#333434"/>
<rect x="842" y="913" width="162.8" height="69" fill="#333333"/>
<rect x="842.75" y="843.75" width="161.3" height="137.5" fill="none" stroke="#f4f4f4" stroke-width="1.5"/>
<text x="923.4" y="1001.4" font-size="15.6" fill="#f4f4f4" text-anchor="middle">20</text>
<rect x="1032" y="843" width="162.8" height="70" fill="#4b4c4e"/>
<rect x="1032" y="913" width="162.8" height="69" fill="#4b4b4b"/>
<rect x="1032.75" y="843.75" width="161.3" height="137.5" fill="none" stroke="#f4f4f4" stroke-width="1.5"/>
<text x="1113.4" y="1001.4" font-size="15.6" fill="#f4f4f4" text-anchor="middle">30</text>
<rect x="1222" y="843" width="162.8" height="70" fill="#676868"/>
<rect x="1222" y="913" width="162.8" height="69" fill="#666666"/>
<rect x="1222.75" y="843.75" width="161.3" height="137.5" fill="none" stroke="#f4f4f4" stroke-width="1.5"/>
<text x="1303.4" y="1001.4" font-size="15.6" fill="#f4f4f4" text-anchor="middle">40</text>
<rect x="1412" y="843" width="162.8" height="70" fill="#808181"/>
<rect x="1412" y="913" width="162.8" height="69" fill="#808080"/>
<rect x="1412.75" y="843.75" width="161.3" height="137.5" fill="none" stroke="#f4f4f4" stroke-width="1.5"/>
<text x="1493.4" y="1001.4" font-size="15.6" fill="#f4f4f4" text-anchor="middle">50</text>
<rect x="1602" y="843" width="162.8" height="70" fill="#9a9b9a"/>
<rect x="1602" y="913" width="162.8" height="69" fill="#999999"/>
<rect x="1602.75" y="843.75" width="161.3" height="137.5" fill="none" stroke="#f4f4f4" stroke-width="1.5"/>
<text x="1683.4" y="1001.4" font-size="15.6" fill="#f4f4f4" text-anchor="middle">60</text>
<rect x="1792" y="843" width="162.8" height="70" fill="#b3b4b5"/>
<rect x="1792" y="913" width="162.8" height="69" fill="#b3b3b3"/>
<rect x="1792.75" y="843.75" width="161.3" height="137.5" fill="none" stroke="#f4f4f4" stroke-width="1.5"/>
<text x="1873.4" y="1001.4" font-size="15.6" fill="#f4f4f4" text-anchor="middle">70</text>
<rect x="1982" y="843" width="162.8" height="70" fill="#cbcfd0"/>
<rect x="1982" y="913" width="162.8" height="69" fill="#cccccc"/>
<rect x="1982.75" y="843.75" width="161.3" height="137.5" fill="none" stroke="#f4f4f4" stroke-width="1.5"/>
<text x="2063.4" y="1001.4" font-size="15.6" fill="#f4f4f4" text-anchor="middle">80</text>
<rect x="2172" y="843" width="162.8" height="70" fill="#e5e7e6"/>
<rect x="2172" y="913" width="162.8" height="69" fill="#e6e6e6"/>
<rect x="2172.75" y="843.75" width="161.3" height="137.5" fill="none" stroke="#f4f4f4" stroke-width="1.5"/>
<text x="2253.4" y="1001.4" font-size="15.6" fill="#f4f4f4" text-anchor="middle">90</text>
<rect x="2362" y="843" width="162.8" height="70" fill="#ffffff"/>
<rect x="2362" y="913" width="162.8" height="69" fill="#ffffff"/>
<rect x="2362.75" y="843.75" width="161.3" height="137.5" fill="none" stroke="#f4f4f4" stroke-width="1.5"/>
<text x="2443.4" y="1001.4" font-size="15.6" fill="#f4f4f4" text-anchor="middle">100</text>
<text transform="translate(449,873) rotate(-90)" font-size="15" fill="#f4f4f4" text-anchor="middle" textLength="47" lengthAdjust="spacingAndGlyphs">Actual</text>
<text transform="translate(449,951) rotate(-90)" font-size="15" fill="#f4f4f4" text-anchor="middle" textLength="46" lengthAdjust="spacingAndGlyphs">Target</text>
<text x="330.4" y="1103.5" font-size="39.8" fill="#efefef" textLength="295.2" lengthAdjust="spacingAndGlyphs">Current Reading</text>
<text x="330.0" y="1160.8" font-size="32.4" fill="#efefef" textLength="137.9" lengthAdjust="spacingAndGlyphs">x: 0.3101</text>
<text x="532.4" y="1160.8" font-size="32.4" fill="#efefef" textLength="119.9" lengthAdjust="spacingAndGlyphs">y: 0.329</text>
<text x="330.0" y="1206.5" font-size="32.4" fill="#efefef" textLength="130.6" lengthAdjust="spacingAndGlyphs">u': 0.196</text>
<text x="532.4" y="1206.5" font-size="32.4" fill="#efefef" textLength="147.0" lengthAdjust="spacingAndGlyphs">v': 0.4679</text>
<text x="330.0" y="1252.0" font-size="32.4" fill="#efefef" textLength="253.0" lengthAdjust="spacingAndGlyphs">cd/m²: 351.7163</text>
<text x="330.0" y="1298.0" font-size="32.4" fill="#efefef" textLength="208.2" lengthAdjust="spacingAndGlyphs">ΔE 2000: 2.04</text>
<text x="941.5" y="1056.8" font-size="19" fill="#cfcfcf" text-anchor="middle" textLength="102.5" lengthAdjust="spacingAndGlyphs">CIE 1931 xy</text>
<clipPath id="cpBg"><rect x="795" y="1063.7" width="340.5999999999999" height="223.79999999999995"/></clipPath>
<g clip-path="url(#cpBg)"><g filter="url(#fBlur)"><rect x="785" y="1054" width="11" height="11" fill="#80ffc0"/><rect x="795" y="1054" width="11" height="11" fill="#82ffc0"/><rect x="805" y="1054" width="11" height="11" fill="#87ffc1"/><rect x="815" y="1054" width="11" height="11" fill="#8cffc2"/><rect x="825" y="1054" width="11" height="11" fill="#90ffc3"/><rect x="835" y="1054" width="11" height="11" fill="#95ffc4"/><rect x="845" y="1054" width="11" height="11" fill="#9affc5"/><rect x="855" y="1054" width="11" height="11" fill="#9fffc6"/><rect x="865" y="1054" width="11" height="11" fill="#a3ffc7"/><rect x="875" y="1054" width="11" height="11" fill="#a8ffc8"/><rect x="885" y="1054" width="11" height="11" fill="#aeffc9"/><rect x="895" y="1054" width="11" height="11" fill="#b3ffca"/><rect x="905" y="1054" width="11" height="11" fill="#b9ffcb"/><rect x="915" y="1054" width="11" height="11" fill="#beffcc"/><rect x="925" y="1054" width="11" height="11" fill="#c4ffcd"/><rect x="935" y="1054" width="11" height="11" fill="#caffce"/><rect x="945" y="1054" width="11" height="11" fill="#cfffcf"/><rect x="955" y="1054" width="11" height="11" fill="#d5ffd0"/><rect x="965" y="1054" width="11" height="11" fill="#daffd0"/><rect x="975" y="1054" width="11" height="11" fill="#dfffd1"/><rect x="985" y="1054" width="11" height="11" fill="#e3ffd2"/><rect x="995" y="1054" width="11" height="11" fill="#e8ffd3"/><rect x="1005" y="1054" width="11" height="11" fill="#ecffd4"/><rect x="1015" y="1054" width="11" height="11" fill="#f1ffd5"/><rect x="1025" y="1054" width="11" height="11" fill="#f6ffd6"/><rect x="1035" y="1054" width="11" height="11" fill="#faffd7"/><rect x="1045" y="1054" width="11" height="11" fill="#ffffd8"/><rect x="1055" y="1054" width="11" height="11" fill="#fffcd3"/><rect x="1065" y="1054" width="11" height="11" fill="#fff8cd"/><rect x="1075" y="1054" width="11" height="11" fill="#fff4c7"/><rect x="1085" y="1054" width="11" height="11" fill="#fff1c2"/><rect x="1095" y="1054" width="11" height="11" fill="#ffedbc"/><rect x="1105" y="1054" width="11" height="11" fill="#ffe9b6"/><rect x="1115" y="1054" width="11" height="11" fill="#ffe6b1"/><rect x="1125" y="1054" width="11" height="11" fill="#ffe2ab"/><rect x="1135" y="1054" width="11" height="11" fill="#ffe0a8"/><rect x="1145" y="1054" width="11" height="11" fill="#ffe0a8"/><rect x="785" y="1064" width="11" height="11" fill="#81ffc2"/><rect x="795" y="1064" width="11" height="11" fill="#84ffc3"/><rect x="805" y="1064" width="11" height="11" fill="#88ffc3"/><rect x="815" y="1064" width="11" height="11" fill="#8dffc4"/><rect x="825" y="1064" width="11" height="11" fill="#92ffc5"/><rect x="835" y="1064" width="11" height="11" fill="#97ffc6"/><rect x="845" y="1064" width="11" height="11" fill="#9bffc7"/><rect x="855" y="1064" width="11" height="11" fill="#a0ffc8"/><rect x="865" y="1064" width="11" height="11" fill="#a5ffc9"/><rect x="875" y="1064" width="11" height="11" fill="#a9ffc9"/><rect x="885" y="1064" width="11" height="11" fill="#afffca"/><rect x="895" y="1064" width="11" height="11" fill="#b5ffcb"/><rect x="905" y="1064" width="11" height="11" fill="#baffcc"/><rect x="915" y="1064" width="11" height="11" fill="#c0ffcd"/><rect x="925" y="1064" width="11" height="11" fill="#c6ffce"/><rect x="935" y="1064" width="11" height="11" fill="#cbffcf"/><rect x="945" y="1064" width="11" height="11" fill="#d1ffd0"/><rect x="955" y="1064" width="11" height="11" fill="#d6ffd1"/><rect x="965" y="1064" width="11" height="11" fill="#dcffd2"/><rect x="975" y="1064" width="11" height="11" fill="#e0ffd3"/><rect x="985" y="1064" width="11" height="11" fill="#e4ffd4"/><rect x="995" y="1064" width="11" height="11" fill="#e9ffd4"/><rect x="1005" y="1064" width="11" height="11" fill="#edffd5"/><rect x="1015" y="1064" width="11" height="11" fill="#f2ffd6"/><rect x="1025" y="1064" width="11" height="11" fill="#f6ffd7"/><rect x="1035" y="1064" width="11" height="11" fill="#faffd8"/><rect x="1045" y="1064" width="11" height="11" fill="#ffffd9"/><rect x="1055" y="1064" width="11" height="11" fill="#fffbd3"/><rect x="1065" y="1064" width="11" height="11" fill="#fff8ce"/><rect x="1075" y="1064" width="11" height="11" fill="#fff4c8"/><rect x="1085" y="1064" width="11" height="11" fill="#fff0c2"/><rect x="1095" y="1064" width="11" height="11" fill="#ffecbd"/><rect x="1105" y="1064" width="11" height="11" fill="#ffe8b7"/><rect x="1115" y="1064" width="11" height="11" fill="#ffe5b2"/><rect x="1125" y="1064" width="11" height="11" fill="#ffe1ac"/><rect x="1135" y="1064" width="11" height="11" fill="#ffdfa9"/><rect x="1145" y="1064" width="11" height="11" fill="#ffdfa9"/><rect x="785" y="1074" width="11" height="11" fill="#84ffc6"/><rect x="795" y="1074" width="11" height="11" fill="#87ffc7"/><rect x="805" y="1074" width="11" height="11" fill="#8bffc7"/><rect x="815" y="1074" width="11" height="11" fill="#90ffc8"/><rect x="825" y="1074" width="11" height="11" fill="#95ffc9"/><rect x="835" y="1074" width="11" height="11" fill="#99ffca"/><rect x="845" y="1074" width="11" height="11" fill="#9effca"/><rect x="855" y="1074" width="11" height="11" fill="#a3ffcb"/><rect x="865" y="1074" width="11" height="11" fill="#a8ffcc"/><rect x="875" y="1074" width="11" height="11" fill="#acffcc"/><rect x="885" y="1074" width="11" height="11" fill="#b2ffcd"/><rect x="895" y="1074" width="11" height="11" fill="#b7ffce"/><rect x="905" y="1074" width="11" height="11" fill="#bdffcf"/><rect x="915" y="1074" width="11" height="11" fill="#c3ffd0"/><rect x="925" y="1074" width="11" height="11" fill="#c8ffd1"/><rect x="935" y="1074" width="11" height="11" fill="#ceffd2"/><rect x="945" y="1074" width="11" height="11" fill="#d4ffd3"/><rect x="955" y="1074" width="11" height="11" fill="#d9ffd4"/><rect x="965" y="1074" width="11" height="11" fill="#deffd5"/><rect x="975" y="1074" width="11" height="11" fill="#e2ffd5"/><rect x="985" y="1074" width="11" height="11" fill="#e6ffd6"/><rect x="995" y="1074" width="11" height="11" fill="#eaffd7"/><rect x="1005" y="1074" width="11" height="11" fill="#efffd7"/><rect x="1015" y="1074" width="11" height="11" fill="#f3ffd8"/><rect x="1025" y="1074" width="11" height="11" fill="#f7ffd9"/><rect x="1035" y="1074" width="11" height="11" fill="#fbffd9"/><rect x="1045" y="1074" width="11" height="11" fill="#ffffda"/><rect x="1055" y="1074" width="11" height="11" fill="#fffbd5"/><rect x="1065" y="1074" width="11" height="11" fill="#fff7cf"/><rect x="1075" y="1074" width="11" height="11" fill="#fff3c9"/><rect x="1085" y="1074" width="11" height="11" fill="#ffefc4"/><rect x="1095" y="1074" width="11" height="11" fill="#ffeabe"/><rect x="1105" y="1074" width="11" height="11" fill="#ffe6b9"/><rect x="1115" y="1074" width="11" height="11" fill="#ffe2b3"/><rect x="1125" y="1074" width="11" height="11" fill="#ffdead"/><rect x="1135" y="1074" width="11" height="11" fill="#ffdcaa"/><rect x="1145" y="1074" width="11" height="11" fill="#ffdcaa"/><rect x="785" y="1084" width="11" height="11" fill="#87ffcb"/><rect x="795" y="1084" width="11" height="11" fill="#89ffcb"/><rect x="805" y="1084" width="11" height="11" fill="#8effcc"/><rect x="815" y="1084" width="11" height="11" fill="#93ffcc"/><rect x="825" y="1084" width="11" height="11" fill="#98ffcd"/><rect x="835" y="1084" width="11" height="11" fill="#9cffcd"/><rect x="845" y="1084" width="11" height="11" fill="#a1ffce"/><rect x="855" y="1084" width="11" height="11" fill="#a6ffce"/><rect x="865" y="1084" width="11" height="11" fill="#aaffcf"/><rect x="875" y="1084" width="11" height="11" fill="#afffcf"/><rect x="885" y="1084" width="11" height="11" fill="#b5ffd0"/><rect x="895" y="1084" width="11" height="11" fill="#baffd1"/><rect x="905" y="1084" width="11" height="11" fill="#c0ffd2"/><rect x="915" y="1084" width="11" height="11" fill="#c6ffd3"/><rect x="925" y="1084" width="11" height="11" fill="#cbffd4"/><rect x="935" y="1084" width="11" height="11" fill="#d1ffd5"/><rect x="945" y="1084" width="11" height="11" fill="#d7ffd6"/><rect x="955" y="1084" width="11" height="11" fill="#dcffd7"/><rect x="965" y="1084" width="11" height="11" fill="#e1ffd7"/><rect x="975" y="1084" width="11" height="11" fill="#e5ffd8"/><rect x="985" y="1084" width="11" height="11" fill="#e8ffd8"/><rect x="995" y="1084" width="11" height="11" fill="#ecffd9"/><rect x="1005" y="1084" width="11" height="11" fill="#f0ffd9"/><rect x="1015" y="1084" width="11" height="11" fill="#f4ffda"/><rect x="1025" y="1084" width="11" height="11" fill="#f7ffdb"/><rect x="1035" y="1084" width="11" height="11" fill="#fbffdb"/><rect x="1045" y="1084" width="11" height="11" fill="#ffffdc"/><rect x="1055" y="1084" width="11" height="11" fill="#fffbd6"/><rect x="1065" y="1084" width="11" height="11" fill="#fff6d1"/><rect x="1075" y="1084" width="11" height="11" fill="#fff2cb"/><rect x="1085" y="1084" width="11" height="11" fill="#ffedc5"/><rect x="1095" y="1084" width="11" height="11" fill="#ffe9c0"/><rect x="1105" y="1084" width="11" height="11" fill="#ffe4ba"/><rect x="1115" y="1084" width="11" height="11" fill="#ffe0b4"/><rect x="1125" y="1084" width="11" height="11" fill="#ffdbaf"/><rect x="1135" y="1084" width="11" height="11" fill="#ffd9ac"/><rect x="1145" y="1084" width="11" height="11" fill="#ffd9ac"/><rect x="785" y="1094" width="11" height="11" fill="#8affcf"/><rect x="795" y="1094" width="11" height="11" fill="#8cffcf"/><rect x="805" y="1094" width="11" height="11" fill="#91ffd0"/><rect x="815" y="1094" width="11" height="11" fill="#96ffd0"/><rect x="825" y="1094" width="11" height="11" fill="#9affd0"/><rect x="835" y="1094" width="11" height="11" fill="#9fffd1"/><rect x="845" y="1094" width="11" height="11" fill="#a4ffd1"/><rect x="855" y="1094" width="11" height="11" fill="#a9ffd1"/><rect x="865" y="1094" width="11" height="11" fill="#adffd2"/><rect x="875" y="1094" width="11" height="11" fill="#b2ffd2"/><rect x="885" y="1094" width="11" height="11" fill="#b8ffd3"/><rect x="895" y="1094" width="11" height="11" fill="#bdffd4"/><rect x="905" y="1094" width="11" height="11" fill="#c3ffd5"/><rect x="915" y="1094" width="11" height="11" fill="#c8ffd6"/><rect x="925" y="1094" width="11" height="11" fill="#ceffd7"/><rect x="935" y="1094" width="11" height="11" fill="#d4ffd8"/><rect x="945" y="1094" width="11" height="11" fill="#d9ffd9"/><rect x="955" y="1094" width="11" height="11" fill="#dfffda"/><rect x="965" y="1094" width="11" height="11" fill="#e4ffda"/><rect x="975" y="1094" width="11" height="11" fill="#e7ffdb"/><rect x="985" y="1094" width="11" height="11" fill="#eaffdb"/><rect x="995" y="1094" width="11" height="11" fill="#eeffdb"/><rect x="1005" y="1094" width="11" height="11" fill="#f1ffdc"/><rect x="1015" y="1094" width="11" height="11" fill="#f5ffdc"/><rect x="1025" y="1094" width="11" height="11" fill="#f8ffdc"/><rect x="1035" y="1094" width="11" height="11" fill="#fbffdd"/><rect x="1045" y="1094" width="11" height="11" fill="#ffffdd"/><rect x="1055" y="1094" width="11" height="11" fill="#fffad8"/><rect x="1065" y="1094" width="11" height="11" fill="#fff6d2"/><rect x="1075" y="1094" width="11" height="11" fill="#fff1cc"/><rect x="1085" y="1094" width="11" height="11" fill="#ffecc7"/><rect x="1095" y="1094" width="11" height="11" fill="#ffe7c1"/><rect x="1105" y="1094" width="11" height="11" fill="#ffe2bb"/><rect x="1115" y="1094" width="11" height="11" fill="#ffdeb6"/><rect x="1125" y="1094" width="11" height="11" fill="#ffd9b0"/><rect x="1135" y="1094" width="11" height="11" fill="#ffd6ad"/><rect x="1145" y="1094" width="11" height="11" fill="#ffd6ad"/><rect x="785" y="1104" width="11" height="11" fill="#8dffd3"/><rect x="795" y="1104" width="11" height="11" fill="#8fffd3"/><rect x="805" y="1104" width="11" height="11" fill="#94ffd4"/><rect x="815" y="1104" width="11" height="11" fill="#99ffd4"/><rect x="825" y="1104" width="11" height="11" fill="#9dffd4"/><rect x="835" y="1104" width="11" height="11" fill="#a2ffd4"/><rect x="845" y="1104" width="11" height="11" fill="#a7ffd4"/><rect x="855" y="1104" width="11" height="11" fill="#abffd4"/><rect x="865" y="1104" width="11" height="11" fill="#b0ffd5"/><rect x="875" y="1104" width="11" height="11" fill="#b5ffd5"/><rect x="885" y="1104" width="11" height="11" fill="#baffd6"/><rect x="895" y="1104" width="11" height="11" fill="#c0ffd7"/><rect x="905" y="1104" width="11" height="11" fill="#c6ffd8"/><rect x="915" y="1104" width="11" height="11" fill="#cbffd9"/><rect x="925" y="1104" width="11" height="11" fill="#d1ffda"/><rect x="935" y="1104" width="11" height="11" fill="#d7ffda"/><rect x="945" y="1104" width="11" height="11" fill="#dcffdb"/><rect x="955" y="1104" width="11" height="11" fill="#e2ffdc"/><rect x="965" y="1104" width="11" height="11" fill="#e6ffdd"/><rect x="975" y="1104" width="11" height="11" fill="#e9ffdd"/><rect x="985" y="1104" width="11" height="11" fill="#ecffdd"/><rect x="995" y="1104" width="11" height="11" fill="#f0ffde"/><rect x="1005" y="1104" width="11" height="11" fill="#f3ffde"/><rect x="1015" y="1104" width="11" height="11" fill="#f6ffde"/><rect x="1025" y="1104" width="11" height="11" fill="#f9ffde"/><rect x="1035" y="1104" width="11" height="11" fill="#fcffde"/><rect x="1045" y="1104" width="11" height="11" fill="#ffffde"/><rect x="1055" y="1104" width="11" height="11" fill="#fffad9"/><rect x="1065" y="1104" width="11" height="11" fill="#fff5d3"/><rect x="1075" y="1104" width="11" height="11" fill="#fff0ce"/><rect x="1085" y="1104" width="11" height="11" fill="#ffebc8"/><rect x="1095" y="1104" width="11" height="11" fill="#ffe5c3"/><rect x="1105" y="1104" width="11" height="11" fill="#ffe0bd"/><rect x="1115" y="1104" width="11" height="11" fill="#ffdbb7"/><rect x="1125" y="1104" width="11" height="11" fill="#ffd6b2"/><rect x="1135" y="1104" width="11" height="11" fill="#ffd3ae"/><rect x="1145" y="1104" width="11" height="11" fill="#ffd3ae"/><rect x="785" y="1114" width="11" height="11" fill="#90ffd8"/><rect x="795" y="1114" width="11" height="11" fill="#92ffd8"/><rect x="805" y="1114" width="11" height="11" fill="#97ffd8"/><rect x="815" y="1114" width="11" height="11" fill="#9bffd8"/><rect x="825" y="1114" width="11" height="11" fill="#a0ffd8"/><rect x="835" y="1114" width="11" height="11" fill="#a5ffd8"/><rect x="845" y="1114" width="11" height="11" fill="#aaffd8"/><rect x="855" y="1114" width="11" height="11" fill="#aeffd8"/><rect x="865" y="1114" width="11" height="11" fill="#b3ffd8"/><rect x="875" y="1114" width="11" height="11" fill="#b8ffd8"/><rect x="885" y="1114" width="11" height="11" fill="#bdffd9"/><rect x="895" y="1114" width="11" height="11" fill="#c3ffda"/><rect x="905" y="1114" width="11" height="11" fill="#c9ffdb"/><rect x="915" y="1114" width="11" height="11" fill="#ceffdb"/><rect x="925" y="1114" width="11" height="11" fill="#d4ffdc"/><rect x="935" y="1114" width="11" height="11" fill="#d9ffdd"/><rect x="945" y="1114" width="11" height="11" fill="#dfffde"/><rect x="955" y="1114" width="11" height="11" fill="#e5ffdf"/><rect x="965" y="1114" width="11" height="11" fill="#e9ffe0"/><rect x="975" y="1114" width="11" height="11" fill="#ecffe0"/><rect x="985" y="1114" width="11" height="11" fill="#eeffe0"/><rect x="995" y="1114" width="11" height="11" fill="#f1ffe0"/><rect x="1005" y="1114" width="11" height="11" fill="#f4ffe0"/><rect x="1015" y="1114" width="11" height="11" fill="#f7ffe0"/><rect x="1025" y="1114" width="11" height="11" fill="#f9ffe0"/><rect x="1035" y="1114" width="11" height="11" fill="#fcffe0"/><rect x="1045" y="1114" width="11" height="11" fill="#ffffe0"/><rect x="1055" y="1114" width="11" height="11" fill="#fffada"/><rect x="1065" y="1114" width="11" height="11" fill="#fff4d5"/><rect x="1075" y="1114" width="11" height="11" fill="#ffefcf"/><rect x="1085" y="1114" width="11" height="11" fill="#ffe9ca"/><rect x="1095" y="1114" width="11" height="11" fill="#ffe4c4"/><rect x="1105" y="1114" width="11" height="11" fill="#ffdebe"/><rect x="1115" y="1114" width="11" height="11" fill="#ffd9b9"/><rect x="1125" y="1114" width="11" height="11" fill="#ffd3b3"/><rect x="1135" y="1114" width="11" height="11" fill="#ffd0b0"/><rect x="1145" y="1114" width="11" height="11" fill="#ffd0b0"/><rect x="785" y="1124" width="11" height="11" fill="#93ffde"/><rect x="795" y="1124" width="11" height="11" fill="#95ffde"/><rect x="805" y="1124" width="11" height="11" fill="#9affde"/><rect x="815" y="1124" width="11" height="11" fill="#9fffde"/><rect x="825" y="1124" width="11" height="11" fill="#a4ffde"/><rect x="835" y="1124" width="11" height="11" fill="#a8ffde"/><rect x="845" y="1124" width="11" height="11" fill="#adffde"/><rect x="855" y="1124" width="11" height="11" fill="#b2ffde"/><rect x="865" y="1124" width="11" height="11" fill="#b7ffde"/><rect x="875" y="1124" width="11" height="11" fill="#bcffde"/><rect x="885" y="1124" width="11" height="11" fill="#c1ffdf"/><rect x="895" y="1124" width="11" height="11" fill="#c7ffe0"/><rect x="905" y="1124" width="11" height="11" fill="#ccffe1"/><rect x="915" y="1124" width="11" height="11" fill="#d2ffe1"/><rect x="925" y="1124" width="11" height="11" fill="#d8ffe2"/><rect x="935" y="1124" width="11" height="11" fill="#ddffe3"/><rect x="945" y="1124" width="11" height="11" fill="#e3ffe4"/><rect x="955" y="1124" width="11" height="11" fill="#e8ffe5"/><rect x="965" y="1124" width="11" height="11" fill="#ecfee5"/><rect x="975" y="1124" width="11" height="11" fill="#effee4"/><rect x="985" y="1124" width="11" height="11" fill="#f1fde3"/><rect x="995" y="1124" width="11" height="11" fill="#f3fce2"/><rect x="1005" y="1124" width="11" height="11" fill="#f6fbe1"/><rect x="1015" y="1124" width="11" height="11" fill="#f8fbe0"/><rect x="1025" y="1124" width="11" height="11" fill="#fafadf"/><rect x="1035" y="1124" width="11" height="11" fill="#fdf9de"/><rect x="1045" y="1124" width="11" height="11" fill="#fff9dd"/><rect x="1055" y="1124" width="11" height="11" fill="#fff4d8"/><rect x="1065" y="1124" width="11" height="11" fill="#ffeed3"/><rect x="1075" y="1124" width="11" height="11" fill="#ffe9ce"/><rect x="1085" y="1124" width="11" height="11" fill="#ffe4c8"/><rect x="1095" y="1124" width="11" height="11" fill="#ffdfc3"/><rect x="1105" y="1124" width="11" height="11" fill="#ffdabe"/><rect x="1115" y="1124" width="11" height="11" fill="#ffd4b8"/><rect x="1125" y="1124" width="11" height="11" fill="#ffcfb3"/><rect x="1135" y="1124" width="11" height="11" fill="#ffccb0"/><rect x="1145" y="1124" width="11" height="11" fill="#ffccb0"/><rect x="785" y="1134" width="11" height="11" fill="#95ffe5"/><rect x="795" y="1134" width="11" height="11" fill="#98ffe5"/><rect x="805" y="1134" width="11" height="11" fill="#9dffe5"/><rect x="815" y="1134" width="11" height="11" fill="#a2ffe5"/><rect x="825" y="1134" width="11" height="11" fill="#a7ffe5"/><rect x="835" y="1134" width="11" height="11" fill="#acffe5"/><rect x="845" y="1134" width="11" height="11" fill="#b1ffe5"/><rect x="855" y="1134" width="11" height="11" fill="#b6ffe5"/><rect x="865" y="1134" width="11" height="11" fill="#bbffe5"/><rect x="875" y="1134" width="11" height="11" fill="#c0ffe5"/><rect x="885" y="1134" width="11" height="11" fill="#c6ffe6"/><rect x="895" y="1134" width="11" height="11" fill="#cbffe7"/><rect x="905" y="1134" width="11" height="11" fill="#d1ffe7"/><rect x="915" y="1134" width="11" height="11" fill="#d6ffe8"/><rect x="925" y="1134" width="11" height="11" fill="#dbfee8"/><rect x="935" y="1134" width="11" height="11" fill="#e1fee9"/><rect x="945" y="1134" width="11" height="11" fill="#e6feea"/><rect x="955" y="1134" width="11" height="11" fill="#ecfeea"/><rect x="965" y="1134" width="11" height="11" fill="#f0fdea"/><rect x="975" y="1134" width="11" height="11" fill="#f2fce8"/><rect x="985" y="1134" width="11" height="11" fill="#f4fae6"/><rect x="995" y="1134" width="11" height="11" fill="#f5f9e4"/><rect x="1005" y="1134" width="11" height="11" fill="#f7f8e2"/><rect x="1015" y="1134" width="11" height="11" fill="#f9f6e0"/><rect x="1025" y="1134" width="11" height="11" fill="#fbf5de"/><rect x="1035" y="1134" width="11" height="11" fill="#fdf3dd"/><rect x="1045" y="1134" width="11" height="11" fill="#fff2db"/><rect x="1055" y="1134" width="11" height="11" fill="#ffedd6"/><rect x="1065" y="1134" width="11" height="11" fill="#ffe8d1"/><rect x="1075" y="1134" width="11" height="11" fill="#ffe3cc"/><rect x="1085" y="1134" width="11" height="11" fill="#ffdec7"/><rect x="1095" y="1134" width="11" height="11" fill="#ffd9c2"/><rect x="1105" y="1134" width="11" height="11" fill="#ffd4bd"/><rect x="1115" y="1134" width="11" height="11" fill="#ffd0b8"/><rect x="1125" y="1134" width="11" height="11" fill="#ffcbb3"/><rect x="1135" y="1134" width="11" height="11" fill="#ffc8b0"/><rect x="1145" y="1134" width="11" height="11" fill="#ffc8b0"/><rect x="785" y="1144" width="11" height="11" fill="#98ffec"/><rect x="795" y="1144" width="11" height="11" fill="#9bffec"/><rect x="805" y="1144" width="11" height="11" fill="#a0ffec"/><rect x="815" y="1144" width="11" height="11" fill="#a5ffec"/><rect x="825" y="1144" width="11" height="11" fill="#aaffec"/><rect x="835" y="1144" width="11" height="11" fill="#b0ffec"/><rect x="845" y="1144" width="11" height="11" fill="#b5ffec"/><rect x="855" y="1144" width="11" height="11" fill="#baffec"/><rect x="865" y="1144" width="11" height="11" fill="#bfffec"/><rect x="875" y="1144" width="11" height="11" fill="#c4ffec"/><rect x="885" y="1144" width="11" height="11" fill="#caffed"/><rect x="895" y="1144" width="11" height="11" fill="#cfffed"/><rect x="905" y="1144" width="11" height="11" fill="#d5feee"/><rect x="915" y="1144" width="11" height="11" fill="#dafeee"/><rect x="925" y="1144" width="11" height="11" fill="#dffeef"/><rect x="935" y="1144" width="11" height="11" fill="#e5feef"/><rect x="945" y="1144" width="11" height="11" fill="#eafeef"/><rect x="955" y="1144" width="11" height="11" fill="#f0fef0"/><rect x="965" y="1144" width="11" height="11" fill="#f3fcef"/><rect x="975" y="1144" width="11" height="11" fill="#f5faec"/><rect x="985" y="1144" width="11" height="11" fill="#f6f8e9"/><rect x="995" y="1144" width="11" height="11" fill="#f8f6e6"/><rect x="1005" y="1144" width="11" height="11" fill="#f9f4e3"/><rect x="1015" y="1144" width="11" height="11" fill="#faf1e0"/><rect x="1025" y="1144" width="11" height="11" fill="#fcefde"/><rect x="1035" y="1144" width="11" height="11" fill="#fdeddb"/><rect x="1045" y="1144" width="11" height="11" fill="#ffebd8"/><rect x="1055" y="1144" width="11" height="11" fill="#ffe6d3"/><rect x="1065" y="1144" width="11" height="11" fill="#ffe2cf"/><rect x="1075" y="1144" width="11" height="11" fill="#ffddca"/><rect x="1085" y="1144" width="11" height="11" fill="#ffd9c5"/><rect x="1095" y="1144" width="11" height="11" fill="#ffd4c1"/><rect x="1105" y="1144" width="11" height="11" fill="#ffcfbc"/><rect x="1115" y="1144" width="11" height="11" fill="#ffcbb7"/><rect x="1125" y="1144" width="11" height="11" fill="#ffc6b3"/><rect x="1135" y="1144" width="11" height="11" fill="#ffc4b0"/><rect x="1145" y="1144" width="11" height="11" fill="#ffc4b0"/><rect x="785" y="1154" width="11" height="11" fill="#9bfff3"/><rect x="795" y="1154" width="11" height="11" fill="#9efff3"/><rect x="805" y="1154" width="11" height="11" fill="#a3fff3"/><rect x="815" y="1154" width="11" height="11" fill="#a9fff3"/><rect x="825" y="1154" width="11" height="11" fill="#aefff3"/><rect x="835" y="1154" width="11" height="11" fill="#b3fff3"/><rect x="845" y="1154" width="11" height="11" fill="#b9fff3"/><rect x="855" y="1154" width="11" height="11" fill="#befff3"/><rect x="865" y="1154" width="11" height="11" fill="#c3fff3"/><rect x="875" y="1154" width="11" height="11" fill="#c9fff3"/><rect x="885" y="1154" width="11" height="11" fill="#cefff3"/><rect x="895" y="1154" width="11" height="11" fill="#d3fff4"/><rect x="905" y="1154" width="11" height="11" fill="#d9fef4"/><rect x="915" y="1154" width="11" height="11" fill="#defef4"/><rect x="925" y="1154" width="11" height="11" fill="#e3fef5"/><rect x="935" y="1154" width="11" height="11" fill="#e9fef5"/><rect x="945" y="1154" width="11" height="11" fill="#eefdf5"/><rect x="955" y="1154" width="11" height="11" fill="#f3fdf5"/><rect x="965" y="1154" width="11" height="11" fill="#f6fcf4"/><rect x="975" y="1154" width="11" height="11" fill="#f8f9f0"/><rect x="985" y="1154" width="11" height="11" fill="#f9f6ec"/><rect x="995" y="1154" width="11" height="11" fill="#faf3e8"/><rect x="1005" y="1154" width="11" height="11" fill="#fbf0e4"/><rect x="1015" y="1154" width="11" height="11" fill="#fcede1"/><rect x="1025" y="1154" width="11" height="11" fill="#fdeadd"/><rect x="1035" y="1154" width="11" height="11" fill="#fee7d9"/><rect x="1045" y="1154" width="11" height="11" fill="#ffe4d5"/><rect x="1055" y="1154" width="11" height="11" fill="#ffe0d1"/><rect x="1065" y="1154" width="11" height="11" fill="#ffdbcc"/><rect x="1075" y="1154" width="11" height="11" fill="#ffd7c8"/><rect x="1085" y="1154" width="11" height="11" fill="#ffd3c4"/><rect x="1095" y="1154" width="11" height="11" fill="#ffcfbf"/><rect x="1105" y="1154" width="11" height="11" fill="#ffcabb"/><rect x="1115" y="1154" width="11" height="11" fill="#ffc6b7"/><rect x="1125" y="1154" width="11" height="11" fill="#ffc2b2"/><rect x="1135" y="1154" width="11" height="11" fill="#ffbfb0"/><rect x="1145" y="1154" width="11" height="11" fill="#ffbfb0"/><rect x="785" y="1164" width="11" height="11" fill="#9efffa"/><rect x="795" y="1164" width="11" height="11" fill="#a1fffa"/><rect x="805" y="1164" width="11" height="11" fill="#a6fffa"/><rect x="815" y="1164" width="11" height="11" fill="#acfffa"/><rect x="825" y="1164" width="11" height="11" fill="#b1fffa"/><rect x="835" y="1164" width="11" height="11" fill="#b7fffa"/><rect x="845" y="1164" width="11" height="11" fill="#bcfffa"/><rect x="855" y="1164" width="11" height="11" fill="#c2fffa"/><rect x="865" y="1164" width="11" height="11" fill="#c7fffa"/><rect x="875" y="1164" width="11" height="11" fill="#cdfffa"/><rect x="885" y="1164" width="11" height="11" fill="#d2fffa"/><rect x="895" y="1164" width="11" height="11" fill="#d7fefa"/><rect x="905" y="1164" width="11" height="11" fill="#ddfefb"/><rect x="915" y="1164" width="11" height="11" fill="#e2fefb"/><rect x="925" y="1164" width="11" height="11" fill="#e7fdfb"/><rect x="935" y="1164" width="11" height="11" fill="#ecfdfb"/><rect x="945" y="1164" width="11" height="11" fill="#f2fdfb"/><rect x="955" y="1164" width="11" height="11" fill="#f7fdfb"/><rect x="965" y="1164" width="11" height="11" fill="#fafbf9"/><rect x="975" y="1164" width="11" height="11" fill="#faf7f4"/><rect x="985" y="1164" width="11" height="11" fill="#fbf3ef"/><rect x="995" y="1164" width="11" height="11" fill="#fcf0ea"/><rect x="1005" y="1164" width="11" height="11" fill="#fcece6"/><rect x="1015" y="1164" width="11" height="11" fill="#fde8e1"/><rect x="1025" y="1164" width="11" height="11" fill="#fee4dc"/><rect x="1035" y="1164" width="11" height="11" fill="#fee1d7"/><rect x="1045" y="1164" width="11" height="11" fill="#ffddd2"/><rect x="1055" y="1164" width="11" height="11" fill="#ffd9ce"/><rect x="1065" y="1164" width="11" height="11" fill="#ffd5ca"/><rect x="1075" y="1164" width="11" height="11" fill="#ffd1c6"/><rect x="1085" y="1164" width="11" height="11" fill="#ffcdc2"/><rect x="1095" y="1164" width="11" height="11" fill="#ffc9be"/><rect x="1105" y="1164" width="11" height="11" fill="#ffc5ba"/><rect x="1115" y="1164" width="11" height="11" fill="#ffc1b6"/><rect x="1125" y="1164" width="11" height="11" fill="#ffbdb2"/><rect x="1135" y="1164" width="11" height="11" fill="#ffbbb0"/><rect x="1145" y="1164" width="11" height="11" fill="#ffbbb0"/><rect x="785" y="1174" width="11" height="11" fill="#a0feff"/><rect x="795" y="1174" width="11" height="11" fill="#a3feff"/><rect x="805" y="1174" width="11" height="11" fill="#a9feff"/><rect x="815" y="1174" width="11" height="11" fill="#aefeff"/><rect x="825" y="1174" width="11" height="11" fill="#b4feff"/><rect x="835" y="1174" width="11" height="11" fill="#bafdff"/><rect x="845" y="1174" width="11" height="11" fill="#bffdff"/><rect x="855" y="1174" width="11" height="11" fill="#c5fdff"/><rect x="865" y="1174" width="11" height="11" fill="#cafdff"/><rect x="875" y="1174" width="11" height="11" fill="#d0fdff"/><rect x="885" y="1174" width="11" height="11" fill="#d5fdff"/><rect x="895" y="1174" width="11" height="11" fill="#dafdff"/><rect x="905" y="1174" width="11" height="11" fill="#dffcff"/><rect x="915" y="1174" width="11" height="11" fill="#e4fcff"/><rect x="925" y="1174" width="11" height="11" fill="#eafcff"/><rect x="935" y="1174" width="11" height="11" fill="#effcff"/><rect x="945" y="1174" width="11" height="11" fill="#f4fbff"/><rect x="955" y="1174" width="11" height="11" fill="#f9fbff"/><rect x="965" y="1174" width="11" height="11" fill="#fcf9fc"/><rect x="975" y="1174" width="11" height="11" fill="#fcf5f7"/><rect x="985" y="1174" width="11" height="11" fill="#fdf1f2"/><rect x="995" y="1174" width="11" height="11" fill="#fdecec"/><rect x="1005" y="1174" width="11" height="11" fill="#fde8e7"/><rect x="1015" y="1174" width="11" height="11" fill="#fee4e1"/><rect x="1025" y="1174" width="11" height="11" fill="#fee0dc"/><rect x="1035" y="1174" width="11" height="11" fill="#ffdcd7"/><rect x="1045" y="1174" width="11" height="11" fill="#ffd7d1"/><rect x="1055" y="1174" width="11" height="11" fill="#ffd3cd"/><rect x="1065" y="1174" width="11" height="11" fill="#ffd0c9"/><rect x="1075" y="1174" width="11" height="11" fill="#ffccc6"/><rect x="1085" y="1174" width="11" height="11" fill="#ffc8c2"/><rect x="1095" y="1174" width="11" height="11" fill="#ffc4be"/><rect x="1105" y="1174" width="11" height="11" fill="#ffc0ba"/><rect x="1115" y="1174" width="11" height="11" fill="#ffbdb6"/><rect x="1125" y="1174" width="11" height="11" fill="#ffb9b3"/><rect x="1135" y="1174" width="11" height="11" fill="#ffb7b0"/><rect x="1145" y="1174" width="11" height="11" fill="#ffb7b0"/><rect x="785" y="1184" width="11" height="11" fill="#a2faff"/><rect x="795" y="1184" width="11" height="11" fill="#a5faff"/><rect x="805" y="1184" width="11" height="11" fill="#aaf9ff"/><rect x="815" y="1184" width="11" height="11" fill="#aff9ff"/><rect x="825" y="1184" width="11" height="11" fill="#b5f9ff"/><rect x="835" y="1184" width="11" height="11" fill="#baf9ff"/><rect x="845" y="1184" width="11" height="11" fill="#c0f8ff"/><rect x="855" y="1184" width="11" height="11" fill="#c5f8ff"/><rect x="865" y="1184" width="11" height="11" fill="#cbf8ff"/><rect x="875" y="1184" width="11" height="11" fill="#d0f8ff"/><rect x="885" y="1184" width="11" height="11" fill="#d5f8ff"/><rect x="895" y="1184" width="11" height="11" fill="#daf8ff"/><rect x="905" y="1184" width="11" height="11" fill="#dff8ff"/><rect x="915" y="1184" width="11" height="11" fill="#e4f8ff"/><rect x="925" y="1184" width="11" height="11" fill="#e9f7ff"/><rect x="935" y="1184" width="11" height="11" fill="#eef7ff"/><rect x="945" y="1184" width="11" height="11" fill="#f3f7ff"/><rect x="955" y="1184" width="11" height="11" fill="#f8f7ff"/><rect x="965" y="1184" width="11" height="11" fill="#fbf5fd"/><rect x="975" y="1184" width="11" height="11" fill="#fcf1f8"/><rect x="985" y="1184" width="11" height="11" fill="#fcedf2"/><rect x="995" y="1184" width="11" height="11" fill="#fde9ed"/><rect x="1005" y="1184" width="11" height="11" fill="#fde5e8"/><rect x="1015" y="1184" width="11" height="11" fill="#fee1e3"/><rect x="1025" y="1184" width="11" height="11" fill="#feddde"/><rect x="1035" y="1184" width="11" height="11" fill="#ffd9d9"/><rect x="1045" y="1184" width="11" height="11" fill="#ffd4d4"/><rect x="1055" y="1184" width="11" height="11" fill="#ffd0d0"/><rect x="1065" y="1184" width="11" height="11" fill="#ffcccc"/><rect x="1075" y="1184" width="11" height="11" fill="#ffc8c8"/><rect x="1085" y="1184" width="11" height="11" fill="#ffc5c4"/><rect x="1095" y="1184" width="11" height="11" fill="#ffc1c0"/><rect x="1105" y="1184" width="11" height="11" fill="#ffbdbc"/><rect x="1115" y="1184" width="11" height="11" fill="#ffb9b8"/><rect x="1125" y="1184" width="11" height="11" fill="#ffb5b4"/><rect x="1135" y="1184" width="11" height="11" fill="#ffb2b2"/><rect x="1145" y="1184" width="11" height="11" fill="#ffb2b2"/><rect x="785" y="1194" width="11" height="11" fill="#a3f6ff"/><rect x="795" y="1194" width="11" height="11" fill="#a6f5ff"/><rect x="805" y="1194" width="11" height="11" fill="#abf5ff"/><rect x="815" y="1194" width="11" height="11" fill="#b0f5ff"/><rect x="825" y="1194" width="11" height="11" fill="#b6f4ff"/><rect x="835" y="1194" width="11" height="11" fill="#bbf4ff"/><rect x="845" y="1194" width="11" height="11" fill="#c0f3ff"/><rect x="855" y="1194" width="11" height="11" fill="#c5f3ff"/><rect x="865" y="1194" width="11" height="11" fill="#cbf3ff"/><rect x="875" y="1194" width="11" height="11" fill="#d0f2ff"/><rect x="885" y="1194" width="11" height="11" fill="#d5f2ff"/><rect x="895" y="1194" width="11" height="11" fill="#daf3ff"/><rect x="905" y="1194" width="11" height="11" fill="#dff3ff"/><rect x="915" y="1194" width="11" height="11" fill="#e4f3ff"/><rect x="925" y="1194" width="11" height="11" fill="#e9f3ff"/><rect x="935" y="1194" width="11" height="11" fill="#eef3ff"/><rect x="945" y="1194" width="11" height="11" fill="#f3f3ff"/><rect x="955" y="1194" width="11" height="11" fill="#f8f4ff"/><rect x="965" y="1194" width="11" height="11" fill="#fbf2fd"/><rect x="975" y="1194" width="11" height="11" fill="#fbeef8"/><rect x="985" y="1194" width="11" height="11" fill="#fceaf3"/><rect x="995" y="1194" width="11" height="11" fill="#fce6ef"/><rect x="1005" y="1194" width="11" height="11" fill="#fde2ea"/><rect x="1015" y="1194" width="11" height="11" fill="#fddee5"/><rect x="1025" y="1194" width="11" height="11" fill="#fedae0"/><rect x="1035" y="1194" width="11" height="11" fill="#fed6dc"/><rect x="1045" y="1194" width="11" height="11" fill="#ffd2d7"/><rect x="1055" y="1194" width="11" height="11" fill="#ffcdd3"/><rect x="1065" y="1194" width="11" height="11" fill="#ffc9cf"/><rect x="1075" y="1194" width="11" height="11" fill="#ffc5ca"/><rect x="1085" y="1194" width="11" height="11" fill="#ffc1c6"/><rect x="1095" y="1194" width="11" height="11" fill="#ffbdc2"/><rect x="1105" y="1194" width="11" height="11" fill="#ffb9be"/><rect x="1115" y="1194" width="11" height="11" fill="#ffb5ba"/><rect x="1125" y="1194" width="11" height="11" fill="#ffb0b6"/><rect x="1135" y="1194" width="11" height="11" fill="#ffaeb3"/><rect x="1145" y="1194" width="11" height="11" fill="#ffaeb3"/><rect x="785" y="1204" width="11" height="11" fill="#a5f1ff"/><rect x="795" y="1204" width="11" height="11" fill="#a7f1ff"/><rect x="805" y="1204" width="11" height="11" fill="#acf1ff"/><rect x="815" y="1204" width="11" height="11" fill="#b1f0ff"/><rect x="825" y="1204" width="11" height="11" fill="#b7efff"/><rect x="835" y="1204" width="11" height="11" fill="#bcefff"/><rect x="845" y="1204" width="11" height="11" fill="#c1eeff"/><rect x="855" y="1204" width="11" height="11" fill="#c6eeff"/><rect x="865" y="1204" width="11" height="11" fill="#cbedff"/><rect x="875" y="1204" width="11" height="11" fill="#d0edff"/><rect x="885" y="1204" width="11" height="11" fill="#d5edff"/><rect x="895" y="1204" width="11" height="11" fill="#daedff"/><rect x="905" y="1204" width="11" height="11" fill="#dfeeff"/><rect x="915" y="1204" width="11" height="11" fill="#e3eeff"/><rect x="925" y="1204" width="11" height="11" fill="#e8efff"/><rect x="935" y="1204" width="11" height="11" fill="#edefff"/><rect x="945" y="1204" width="11" height="11" fill="#f2f0ff"/><rect x="955" y="1204" width="11" height="11" fill="#f7f0ff"/><rect x="965" y="1204" width="11" height="11" fill="#faeefd"/><rect x="975" y="1204" width="11" height="11" fill="#fbeaf9"/><rect x="985" y="1204" width="11" height="11" fill="#fbe6f4"/><rect x="995" y="1204" width="11" height="11" fill="#fce2f0"/><rect x="1005" y="1204" width="11" height="11" fill="#fcdfeb"/><rect x="1015" y="1204" width="11" height="11" fill="#fddbe7"/><rect x="1025" y="1204" width="11" height="11" fill="#fed7e2"/><rect x="1035" y="1204" width="11" height="11" fill="#fed3de"/><rect x="1045" y="1204" width="11" height="11" fill="#ffcfda"/><rect x="1055" y="1204" width="11" height="11" fill="#ffcad5"/><rect x="1065" y="1204" width="11" height="11" fill="#ffc6d1"/><rect x="1075" y="1204" width="11" height="11" fill="#ffc2cd"/><rect x="1085" y="1204" width="11" height="11" fill="#ffbdc8"/><rect x="1095" y="1204" width="11" height="11" fill="#ffb9c4"/><rect x="1105" y="1204" width="11" height="11" fill="#ffb5c0"/><rect x="1115" y="1204" width="11" height="11" fill="#ffb1bb"/><rect x="1125" y="1204" width="11" height="11" fill="#ffacb7"/><rect x="1135" y="1204" width="11" height="11" fill="#ffaab5"/><rect x="1145" y="1204" width="11" height="11" fill="#ffaab5"/><rect x="785" y="1214" width="11" height="11" fill="#a6edff"/><rect x="795" y="1214" width="11" height="11" fill="#a9edff"/><rect x="805" y="1214" width="11" height="11" fill="#aeecff"/><rect x="815" y="1214" width="11" height="11" fill="#b2ebff"/><rect x="825" y="1214" width="11" height="11" fill="#b7ebff"/><rect x="835" y="1214" width="11" height="11" fill="#bceaff"/><rect x="845" y="1214" width="11" height="11" fill="#c1e9ff"/><rect x="855" y="1214" width="11" height="11" fill="#c6e9ff"/><rect x="865" y="1214" width="11" height="11" fill="#cbe8ff"/><rect x="875" y="1214" width="11" height="11" fill="#d0e7ff"/><rect x="885" y="1214" width="11" height="11" fill="#d5e8ff"/><rect x="895" y="1214" width="11" height="11" fill="#dae8ff"/><rect x="905" y="1214" width="11" height="11" fill="#dee9ff"/><rect x="915" y="1214" width="11" height="11" fill="#e3eaff"/><rect x="925" y="1214" width="11" height="11" fill="#e8eaff"/><rect x="935" y="1214" width="11" height="11" fill="#edebff"/><rect x="945" y="1214" width="11" height="11" fill="#f2ecff"/><rect x="955" y="1214" width="11" height="11" fill="#f6ecff"/><rect x="965" y="1214" width="11" height="11" fill="#f9ebfd"/><rect x="975" y="1214" width="11" height="11" fill="#fae7f9"/><rect x="985" y="1214" width="11" height="11" fill="#fbe3f5"/><rect x="995" y="1214" width="11" height="11" fill="#fbdff1"/><rect x="1005" y="1214" width="11" height="11" fill="#fcdbed"/><rect x="1015" y="1214" width="11" height="11" fill="#fdd7e9"/><rect x="1025" y="1214" width="11" height="11" fill="#fed4e5"/><rect x="1035" y="1214" width="11" height="11" fill="#fed0e1"/><rect x="1045" y="1214" width="11" height="11" fill="#ffccdd"/><rect x="1055" y="1214" width="11" height="11" fill="#ffc7d8"/><rect x="1065" y="1214" width="11" height="11" fill="#ffc3d4"/><rect x="1075" y="1214" width="11" height="11" fill="#ffbecf"/><rect x="1085" y="1214" width="11" height="11" fill="#ffbacb"/><rect x="1095" y="1214" width="11" height="11" fill="#ffb5c6"/><rect x="1105" y="1214" width="11" height="11" fill="#ffb1c2"/><rect x="1115" y="1214" width="11" height="11" fill="#ffadbd"/><rect x="1125" y="1214" width="11" height="11" fill="#ffa8b9"/><rect x="1135" y="1214" width="11" height="11" fill="#ffa6b6"/><rect x="1145" y="1214" width="11" height="11" fill="#ffa6b6"/><rect x="785" y="1224" width="11" height="11" fill="#a8e9ff"/><rect x="795" y="1224" width="11" height="11" fill="#aae9ff"/><rect x="805" y="1224" width="11" height="11" fill="#afe8ff"/><rect x="815" y="1224" width="11" height="11" fill="#b3e7ff"/><rect x="825" y="1224" width="11" height="11" fill="#b8e6ff"/><rect x="835" y="1224" width="11" height="11" fill="#bde5ff"/><rect x="845" y="1224" width="11" height="11" fill="#c2e4ff"/><rect x="855" y="1224" width="11" height="11" fill="#c6e3ff"/><rect x="865" y="1224" width="11" height="11" fill="#cbe2ff"/><rect x="875" y="1224" width="11" height="11" fill="#d0e2ff"/><rect x="885" y="1224" width="11" height="11" fill="#d5e2ff"/><rect x="895" y="1224" width="11" height="11" fill="#d9e3ff"/><rect x="905" y="1224" width="11" height="11" fill="#dee4ff"/><rect x="915" y="1224" width="11" height="11" fill="#e3e5ff"/><rect x="925" y="1224" width="11" height="11" fill="#e8e6ff"/><rect x="935" y="1224" width="11" height="11" fill="#ece7ff"/><rect x="945" y="1224" width="11" height="11" fill="#f1e8ff"/><rect x="955" y="1224" width="11" height="11" fill="#f6e9ff"/><rect x="965" y="1224" width="11" height="11" fill="#f9e7fd"/><rect x="975" y="1224" width="11" height="11" fill="#f9e3fa"/><rect x="985" y="1224" width="11" height="11" fill="#fae0f6"/><rect x="995" y="1224" width="11" height="11" fill="#fbdcf2"/><rect x="1005" y="1224" width="11" height="11" fill="#fcd8ee"/><rect x="1015" y="1224" width="11" height="11" fill="#fdd4eb"/><rect x="1025" y="1224" width="11" height="11" fill="#fdd1e7"/><rect x="1035" y="1224" width="11" height="11" fill="#fecde3"/><rect x="1045" y="1224" width="11" height="11" fill="#ffc9df"/><rect x="1055" y="1224" width="11" height="11" fill="#ffc4db"/><rect x="1065" y="1224" width="11" height="11" fill="#ffc0d6"/><rect x="1075" y="1224" width="11" height="11" fill="#ffbbd1"/><rect x="1085" y="1224" width="11" height="11" fill="#ffb6cd"/><rect x="1095" y="1224" width="11" height="11" fill="#ffb2c8"/><rect x="1105" y="1224" width="11" height="11" fill="#ffadc3"/><rect x="1115" y="1224" width="11" height="11" fill="#ffa8bf"/><rect x="1125" y="1224" width="11" height="11" fill="#ffa4ba"/><rect x="1135" y="1224" width="11" height="11" fill="#ffa1b8"/><rect x="1145" y="1224" width="11" height="11" fill="#ffa1b8"/><rect x="785" y="1234" width="11" height="11" fill="#a8e4ff"/><rect x="795" y="1234" width="11" height="11" fill="#aae4ff"/><rect x="805" y="1234" width="11" height="11" fill="#afe3ff"/><rect x="815" y="1234" width="11" height="11" fill="#b4e2ff"/><rect x="825" y="1234" width="11" height="11" fill="#b8e1ff"/><rect x="835" y="1234" width="11" height="11" fill="#bde0ff"/><rect x="845" y="1234" width="11" height="11" fill="#c2dfff"/><rect x="855" y="1234" width="11" height="11" fill="#c7dfff"/><rect x="865" y="1234" width="11" height="11" fill="#cbdeff"/><rect x="875" y="1234" width="11" height="11" fill="#d0ddff"/><rect x="885" y="1234" width="11" height="11" fill="#d5deff"/><rect x="895" y="1234" width="11" height="11" fill="#dadfff"/><rect x="905" y="1234" width="11" height="11" fill="#dedfff"/><rect x="915" y="1234" width="11" height="11" fill="#e3e0ff"/><rect x="925" y="1234" width="11" height="11" fill="#e8e1fe"/><rect x="935" y="1234" width="11" height="11" fill="#ede2fe"/><rect x="945" y="1234" width="11" height="11" fill="#f2e3fe"/><rect x="955" y="1234" width="11" height="11" fill="#f6e3fe"/><rect x="965" y="1234" width="11" height="11" fill="#f9e2fc"/><rect x="975" y="1234" width="11" height="11" fill="#fadff9"/><rect x="985" y="1234" width="11" height="11" fill="#fbdbf5"/><rect x="995" y="1234" width="11" height="11" fill="#fbd7f1"/><rect x="1005" y="1234" width="11" height="11" fill="#fcd4ee"/><rect x="1015" y="1234" width="11" height="11" fill="#fdd0ea"/><rect x="1025" y="1234" width="11" height="11" fill="#fecce6"/><rect x="1035" y="1234" width="11" height="11" fill="#fec9e3"/><rect x="1045" y="1234" width="11" height="11" fill="#ffc5df"/><rect x="1055" y="1234" width="11" height="11" fill="#ffc0db"/><rect x="1065" y="1234" width="11" height="11" fill="#ffbcd6"/><rect x="1075" y="1234" width="11" height="11" fill="#ffb7d1"/><rect x="1085" y="1234" width="11" height="11" fill="#ffb2cd"/><rect x="1095" y="1234" width="11" height="11" fill="#ffaec8"/><rect x="1105" y="1234" width="11" height="11" fill="#ffa9c4"/><rect x="1115" y="1234" width="11" height="11" fill="#ffa4bf"/><rect x="1125" y="1234" width="11" height="11" fill="#ffa0bb"/><rect x="1135" y="1234" width="11" height="11" fill="#ff9db8"/><rect x="1145" y="1234" width="11" height="11" fill="#ff9db8"/><rect x="785" y="1244" width="11" height="11" fill="#a8deff"/><rect x="795" y="1244" width="11" height="11" fill="#aadeff"/><rect x="805" y="1244" width="11" height="11" fill="#afddff"/><rect x="815" y="1244" width="11" height="11" fill="#b4ddff"/><rect x="825" y="1244" width="11" height="11" fill="#b8dcff"/><rect x="835" y="1244" width="11" height="11" fill="#bddbff"/><rect x="845" y="1244" width="11" height="11" fill="#c2dbff"/><rect x="855" y="1244" width="11" height="11" fill="#c7daff"/><rect x="865" y="1244" width="11" height="11" fill="#cbd9ff"/><rect x="875" y="1244" width="11" height="11" fill="#d0d9ff"/><rect x="885" y="1244" width="11" height="11" fill="#d5d9ff"/><rect x="895" y="1244" width="11" height="11" fill="#dadafe"/><rect x="905" y="1244" width="11" height="11" fill="#dfdbfe"/><rect x="915" y="1244" width="11" height="11" fill="#e4dbfe"/><rect x="925" y="1244" width="11" height="11" fill="#e9dcfe"/><rect x="935" y="1244" width="11" height="11" fill="#eeddfd"/><rect x="945" y="1244" width="11" height="11" fill="#f3ddfd"/><rect x="955" y="1244" width="11" height="11" fill="#f8defd"/><rect x="965" y="1244" width="11" height="11" fill="#faddfb"/><rect x="975" y="1244" width="11" height="11" fill="#fbd9f7"/><rect x="985" y="1244" width="11" height="11" fill="#fcd6f4"/><rect x="995" y="1244" width="11" height="11" fill="#fcd2f0"/><rect x="1005" y="1244" width="11" height="11" fill="#fdcfec"/><rect x="1015" y="1244" width="11" height="11" fill="#fdcbe9"/><rect x="1025" y="1244" width="11" height="11" fill="#fec8e5"/><rect x="1035" y="1244" width="11" height="11" fill="#fec4e1"/><rect x="1045" y="1244" width="11" height="11" fill="#ffc1de"/><rect x="1055" y="1244" width="11" height="11" fill="#ffbcd9"/><rect x="1065" y="1244" width="11" height="11" fill="#ffb7d5"/><rect x="1075" y="1244" width="11" height="11" fill="#ffb3d1"/><rect x="1085" y="1244" width="11" height="11" fill="#ffaecc"/><rect x="1095" y="1244" width="11" height="11" fill="#ffa9c8"/><rect x="1105" y="1244" width="11" height="11" fill="#ffa5c3"/><rect x="1115" y="1244" width="11" height="11" fill="#ffa0bf"/><rect x="1125" y="1244" width="11" height="11" fill="#ff9bba"/><rect x="1135" y="1244" width="11" height="11" fill="#ff99b8"/><rect x="1145" y="1244" width="11" height="11" fill="#ff99b8"/><rect x="785" y="1254" width="11" height="11" fill="#a8d8ff"/><rect x="795" y="1254" width="11" height="11" fill="#aad8ff"/><rect x="805" y="1254" width="11" height="11" fill="#afd8ff"/><rect x="815" y="1254" width="11" height="11" fill="#b4d7ff"/><rect x="825" y="1254" width="11" height="11" fill="#b8d7ff"/><rect x="835" y="1254" width="11" height="11" fill="#bdd6ff"/><rect x="845" y="1254" width="11" height="11" fill="#c2d6ff"/><rect x="855" y="1254" width="11" height="11" fill="#c7d5ff"/><rect x="865" y="1254" width="11" height="11" fill="#cbd5ff"/><rect x="875" y="1254" width="11" height="11" fill="#d0d4ff"/><rect x="885" y="1254" width="11" height="11" fill="#d5d5ff"/><rect x="895" y="1254" width="11" height="11" fill="#dad5fe"/><rect x="905" y="1254" width="11" height="11" fill="#dfd6fe"/><rect x="915" y="1254" width="11" height="11" fill="#e4d6fd"/><rect x="925" y="1254" width="11" height="11" fill="#e9d7fd"/><rect x="935" y="1254" width="11" height="11" fill="#efd7fd"/><rect x="945" y="1254" width="11" height="11" fill="#f4d8fc"/><rect x="955" y="1254" width="11" height="11" fill="#f9d8fc"/><rect x="965" y="1254" width="11" height="11" fill="#fcd7fa"/><rect x="975" y="1254" width="11" height="11" fill="#fcd4f6"/><rect x="985" y="1254" width="11" height="11" fill="#fcd0f2"/><rect x="995" y="1254" width="11" height="11" fill="#fdcdef"/><rect x="1005" y="1254" width="11" height="11" fill="#fdcaeb"/><rect x="1015" y="1254" width="11" height="11" fill="#fec6e7"/><rect x="1025" y="1254" width="11" height="11" fill="#fec3e4"/><rect x="1035" y="1254" width="11" height="11" fill="#ffc0e0"/><rect x="1045" y="1254" width="11" height="11" fill="#ffbddc"/><rect x="1055" y="1254" width="11" height="11" fill="#ffb8d8"/><rect x="1065" y="1254" width="11" height="11" fill="#ffb3d4"/><rect x="1075" y="1254" width="11" height="11" fill="#ffaed0"/><rect x="1085" y="1254" width="11" height="11" fill="#ffaacb"/><rect x="1095" y="1254" width="11" height="11" fill="#ffa5c7"/><rect x="1105" y="1254" width="11" height="11" fill="#ffa0c3"/><rect x="1115" y="1254" width="11" height="11" fill="#ff9cbf"/><rect x="1125" y="1254" width="11" height="11" fill="#ff97ba"/><rect x="1135" y="1254" width="11" height="11" fill="#ff94b8"/><rect x="1145" y="1254" width="11" height="11" fill="#ff94b8"/><rect x="785" y="1264" width="11" height="11" fill="#a8d3ff"/><rect x="795" y="1264" width="11" height="11" fill="#aad3ff"/><rect x="805" y="1264" width="11" height="11" fill="#afd2ff"/><rect x="815" y="1264" width="11" height="11" fill="#b4d2ff"/><rect x="825" y="1264" width="11" height="11" fill="#b8d2ff"/><rect x="835" y="1264" width="11" height="11" fill="#bdd1ff"/><rect x="845" y="1264" width="11" height="11" fill="#c2d1ff"/><rect x="855" y="1264" width="11" height="11" fill="#c7d1ff"/><rect x="865" y="1264" width="11" height="11" fill="#cbd0ff"/><rect x="875" y="1264" width="11" height="11" fill="#d0d0ff"/><rect x="885" y="1264" width="11" height="11" fill="#d5d0fe"/><rect x="895" y="1264" width="11" height="11" fill="#dad1fe"/><rect x="905" y="1264" width="11" height="11" fill="#e0d1fd"/><rect x="915" y="1264" width="11" height="11" fill="#e5d1fd"/><rect x="925" y="1264" width="11" height="11" fill="#ead2fc"/><rect x="935" y="1264" width="11" height="11" fill="#efd2fc"/><rect x="945" y="1264" width="11" height="11" fill="#f5d2fb"/><rect x="955" y="1264" width="11" height="11" fill="#fad3fb"/><rect x="965" y="1264" width="11" height="11" fill="#fdd1f9"/><rect x="975" y="1264" width="11" height="11" fill="#fdcef5"/><rect x="985" y="1264" width="11" height="11" fill="#fdcbf1"/><rect x="995" y="1264" width="11" height="11" fill="#fec8ed"/><rect x="1005" y="1264" width="11" height="11" fill="#fec5ea"/><rect x="1015" y="1264" width="11" height="11" fill="#fec2e6"/><rect x="1025" y="1264" width="11" height="11" fill="#febee2"/><rect x="1035" y="1264" width="11" height="11" fill="#ffbbdf"/><rect x="1045" y="1264" width="11" height="11" fill="#ffb8db"/><rect x="1055" y="1264" width="11" height="11" fill="#ffb4d7"/><rect x="1065" y="1264" width="11" height="11" fill="#ffafd3"/><rect x="1075" y="1264" width="11" height="11" fill="#ffaacf"/><rect x="1085" y="1264" width="11" height="11" fill="#ffa5cb"/><rect x="1095" y="1264" width="11" height="11" fill="#ffa1c7"/><rect x="1105" y="1264" width="11" height="11" fill="#ff9cc2"/><rect x="1115" y="1264" width="11" height="11" fill="#ff97be"/><rect x="1125" y="1264" width="11" height="11" fill="#ff93ba"/><rect x="1135" y="1264" width="11" height="11" fill="#ff90b8"/><rect x="1145" y="1264" width="11" height="11" fill="#ff90b8"/><rect x="785" y="1274" width="11" height="11" fill="#a8cdff"/><rect x="795" y="1274" width="11" height="11" fill="#aacdff"/><rect x="805" y="1274" width="11" height="11" fill="#afcdff"/><rect x="815" y="1274" width="11" height="11" fill="#b4cdff"/><rect x="825" y="1274" width="11" height="11" fill="#b8cdff"/><rect x="835" y="1274" width="11" height="11" fill="#bdccff"/><rect x="845" y="1274" width="11" height="11" fill="#c2ccff"/><rect x="855" y="1274" width="11" height="11" fill="#c7ccff"/><rect x="865" y="1274" width="11" height="11" fill="#cbccff"/><rect x="875" y="1274" width="11" height="11" fill="#d0ccff"/><rect x="885" y="1274" width="11" height="11" fill="#d5ccfe"/><rect x="895" y="1274" width="11" height="11" fill="#dbccfe"/><rect x="905" y="1274" width="11" height="11" fill="#e0ccfd"/><rect x="915" y="1274" width="11" height="11" fill="#e5ccfc"/><rect x="925" y="1274" width="11" height="11" fill="#ebcdfc"/><rect x="935" y="1274" width="11" height="11" fill="#f0cdfb"/><rect x="945" y="1274" width="11" height="11" fill="#f6cdfa"/><rect x="955" y="1274" width="11" height="11" fill="#fbcdf9"/><rect x="965" y="1274" width="11" height="11" fill="#feccf7"/><rect x="975" y="1274" width="11" height="11" fill="#fec9f4"/><rect x="985" y="1274" width="11" height="11" fill="#fec6f0"/><rect x="995" y="1274" width="11" height="11" fill="#fec3ec"/><rect x="1005" y="1274" width="11" height="11" fill="#fec0e8"/><rect x="1015" y="1274" width="11" height="11" fill="#ffbde5"/><rect x="1025" y="1274" width="11" height="11" fill="#ffbae1"/><rect x="1035" y="1274" width="11" height="11" fill="#ffb7dd"/><rect x="1045" y="1274" width="11" height="11" fill="#ffb4d9"/><rect x="1055" y="1274" width="11" height="11" fill="#ffafd6"/><rect x="1065" y="1274" width="11" height="11" fill="#ffabd2"/><rect x="1075" y="1274" width="11" height="11" fill="#ffa6ce"/><rect x="1085" y="1274" width="11" height="11" fill="#ffa1ca"/><rect x="1095" y="1274" width="11" height="11" fill="#ff9cc6"/><rect x="1105" y="1274" width="11" height="11" fill="#ff98c2"/><rect x="1115" y="1274" width="11" height="11" fill="#ff93be"/><rect x="1125" y="1274" width="11" height="11" fill="#ff8eba"/><rect x="1135" y="1274" width="11" height="11" fill="#ff8cb8"/><rect x="1145" y="1274" width="11" height="11" fill="#ff8cb8"/><rect x="785" y="1284" width="11" height="11" fill="#a8c8ff"/><rect x="795" y="1284" width="11" height="11" fill="#aac8ff"/><rect x="805" y="1284" width="11" height="11" fill="#afc8ff"/><rect x="815" y="1284" width="11" height="11" fill="#b4c8ff"/><rect x="825" y="1284" width="11" height="11" fill="#b8c8ff"/><rect x="835" y="1284" width="11" height="11" fill="#bdc8ff"/><rect x="845" y="1284" width="11" height="11" fill="#c2c8ff"/><rect x="855" y="1284" width="11" height="11" fill="#c7c8ff"/><rect x="865" y="1284" width="11" height="11" fill="#cbc8ff"/><rect x="875" y="1284" width="11" height="11" fill="#d0c8ff"/><rect x="885" y="1284" width="11" height="11" fill="#d5c8fe"/><rect x="895" y="1284" width="11" height="11" fill="#dbc8fd"/><rect x="905" y="1284" width="11" height="11" fill="#e0c8fd"/><rect x="915" y="1284" width="11" height="11" fill="#e6c8fc"/><rect x="925" y="1284" width="11" height="11" fill="#ecc8fb"/><rect x="935" y="1284" width="11" height="11" fill="#f1c8fa"/><rect x="945" y="1284" width="11" height="11" fill="#f7c8f9"/><rect x="955" y="1284" width="11" height="11" fill="#fcc8f8"/><rect x="965" y="1284" width="11" height="11" fill="#ffc7f6"/><rect x="975" y="1284" width="11" height="11" fill="#ffc4f2"/><rect x="985" y="1284" width="11" height="11" fill="#ffc1ef"/><rect x="995" y="1284" width="11" height="11" fill="#ffbeeb"/><rect x="1005" y="1284" width="11" height="11" fill="#ffbbe7"/><rect x="1015" y="1284" width="11" height="11" fill="#ffb9e3"/><rect x="1025" y="1284" width="11" height="11" fill="#ffb6e0"/><rect x="1035" y="1284" width="11" height="11" fill="#ffb3dc"/><rect x="1045" y="1284" width="11" height="11" fill="#ffb0d8"/><rect x="1055" y="1284" width="11" height="11" fill="#ffacd4"/><rect x="1065" y="1284" width="11" height="11" fill="#ffa7d1"/><rect x="1075" y="1284" width="11" height="11" fill="#ffa2cd"/><rect x="1085" y="1284" width="11" height="11" fill="#ff9dc9"/><rect x="1095" y="1284" width="11" height="11" fill="#ff99c5"/><rect x="1105" y="1284" width="11" height="11" fill="#ff94c2"/><rect x="1115" y="1284" width="11" height="11" fill="#ff8fbe"/><rect x="1125" y="1284" width="11" height="11" fill="#ff8bba"/><rect x="1135" y="1284" width="11" height="11" fill="#ff88b8"/><rect x="1145" y="1284" width="11" height="11" fill="#ff88b8"/><rect x="785" y="1294" width="11" height="11" fill="#a8c8ff"/><rect x="795" y="1294" width="11" height="11" fill="#aac8ff"/><rect x="805" y="1294" width="11" height="11" fill="#afc8ff"/><rect x="815" y="1294" width="11" height="11" fill="#b4c8ff"/><rect x="825" y="1294" width="11" height="11" fill="#b8c8ff"/><rect x="835" y="1294" width="11" height="11" fill="#bdc8ff"/><rect x="845" y="1294" width="11" height="11" fill="#c2c8ff"/><rect x="855" y="1294" width="11" height="11" fill="#c7c8ff"/><rect x="865" y="1294" width="11" height="11" fill="#cbc8ff"/><rect x="875" y="1294" width="11" height="11" fill="#d0c8ff"/><rect x="885" y="1294" width="11" height="11" fill="#d5c8fe"/><rect x="895" y="1294" width="11" height="11" fill="#dbc8fd"/><rect x="905" y="1294" width="11" height="11" fill="#e0c8fd"/><rect x="915" y="1294" width="11" height="11" fill="#e6c8fc"/><rect x="925" y="1294" width="11" height="11" fill="#ecc8fb"/><rect x="935" y="1294" width="11" height="11" fill="#f1c8fa"/><rect x="945" y="1294" width="11" height="11" fill="#f7c8f9"/><rect x="955" y="1294" width="11" height="11" fill="#fcc8f8"/><rect x="965" y="1294" width="11" height="11" fill="#ffc7f6"/><rect x="975" y="1294" width="11" height="11" fill="#ffc4f2"/><rect x="985" y="1294" width="11" height="11" fill="#ffc1ef"/><rect x="995" y="1294" width="11" height="11" fill="#ffbeeb"/><rect x="1005" y="1294" width="11" height="11" fill="#ffbbe7"/><rect x="1015" y="1294" width="11" height="11" fill="#ffb9e3"/><rect x="1025" y="1294" width="11" height="11" fill="#ffb6e0"/><rect x="1035" y="1294" width="11" height="11" fill="#ffb3dc"/><rect x="1045" y="1294" width="11" height="11" fill="#ffb0d8"/><rect x="1055" y="1294" width="11" height="11" fill="#ffacd4"/><rect x="1065" y="1294" width="11" height="11" fill="#ffa7d1"/><rect x="1075" y="1294" width="11" height="11" fill="#ffa2cd"/><rect x="1085" y="1294" width="11" height="11" fill="#ff9dc9"/><rect x="1095" y="1294" width="11" height="11" fill="#ff99c5"/><rect x="1105" y="1294" width="11" height="11" fill="#ff94c2"/><rect x="1115" y="1294" width="11" height="11" fill="#ff8fbe"/><rect x="1125" y="1294" width="11" height="11" fill="#ff8bba"/><rect x="1135" y="1294" width="11" height="11" fill="#ff88b8"/><rect x="1145" y="1294" width="11" height="11" fill="#ff88b8"/></g></g>
<clipPath id="cpC"><rect x="795" y="1063.7" width="340.5999999999999" height="223.79999999999995"/></clipPath>
<g clip-path="url(#cpC)"><line x1="836" y1="1288" x2="1136" y2="1100.5" stroke="#000" stroke-width="4.2"/><rect x="954.5" y="1165.5" width="19.5" height="18.5" fill="#fff" stroke="#000" stroke-width="2"/><circle cx="940.4" cy="1184.8" r="6.8" fill="#444" stroke="#222" stroke-width="1.3"/><circle cx="938" cy="1178.6" r="6.8" fill="#555" stroke="#222" stroke-width="1.3"/><circle cx="945.8" cy="1181" r="6.8" fill="#aaa" stroke="#222" stroke-width="1.3"/><circle cx="953.5" cy="1171.6" r="6.8" fill="#ddd" stroke="#222" stroke-width="1.3"/><circle cx="951.2" cy="1170.8" r="6.8" fill="#eee" stroke="#222" stroke-width="1.3"/><circle cx="948.5" cy="1171.5" r="6.8" fill="#f4f4f4" stroke="#222" stroke-width="1.3"/><circle cx="945.8" cy="1173.9" r="6.8" fill="#fff" stroke="#222" stroke-width="1.3"/></g>
<rect x="795" y="1063.7" width="340.6" height="223.8" fill="none" stroke="#9a9a9a" stroke-width="2"/>
<line x1="786" y1="1129.6" x2="795" y2="1129.6" stroke="#dcdcdc" stroke-width="1.6"/>
<text x="785.3" y="1137.1" font-size="19.5" fill="#cfcfcf" text-anchor="end" textLength="37.6" lengthAdjust="spacingAndGlyphs">0.34</text>
<line x1="786" y1="1218.5" x2="795" y2="1218.5" stroke="#dcdcdc" stroke-width="1.6"/>
<text x="785.3" y="1226.0" font-size="19.5" fill="#cfcfcf" text-anchor="end" textLength="37.6" lengthAdjust="spacingAndGlyphs">0.32</text>
<line x1="810" y1="1287.5" x2="810" y2="1296.5" stroke="#dcdcdc" stroke-width="1.8"/>
<text x="810.0" y="1317.6" font-size="19.5" fill="#cfcfcf" text-anchor="middle" textLength="38.6" lengthAdjust="spacingAndGlyphs">0.29</text>
<line x1="878" y1="1287.5" x2="878" y2="1296.5" stroke="#dcdcdc" stroke-width="1.8"/>
<text x="878.0" y="1317.6" font-size="19.5" fill="#cfcfcf" text-anchor="middle" textLength="26.0" lengthAdjust="spacingAndGlyphs">0.3</text>
<line x1="946" y1="1287.5" x2="946" y2="1296.5" stroke="#dcdcdc" stroke-width="1.8"/>
<text x="946.0" y="1317.6" font-size="19.5" fill="#cfcfcf" text-anchor="middle" textLength="38.6" lengthAdjust="spacingAndGlyphs">0.31</text>
<line x1="1014" y1="1287.5" x2="1014" y2="1296.5" stroke="#dcdcdc" stroke-width="1.8"/>
<text x="1014.0" y="1317.6" font-size="19.5" fill="#cfcfcf" text-anchor="middle" textLength="38.6" lengthAdjust="spacingAndGlyphs">0.32</text>
<line x1="1082" y1="1287.5" x2="1082" y2="1296.5" stroke="#dcdcdc" stroke-width="1.8"/>
<text x="1082.0" y="1317.6" font-size="19.5" fill="#cfcfcf" text-anchor="middle" textLength="38.6" lengthAdjust="spacingAndGlyphs">0.33</text>
<rect x="1150" y="1025" width="1398.5" height="311" fill="none" stroke="#e8e8e8" stroke-width="1.6" stroke-dasharray="2 3.4"/>
<rect x="1151" y="1025.8" width="1153" height="33.7" fill="url(#gHdr)"/>
<rect x="1151" y="1059.50" width="1153" height="31.45" fill="#3c3c3c"/>
<text x="1163.7" y="1082.8" font-size="17.8" fill="#f2f2f2" font-weight="bold" textLength="66.7" lengthAdjust="spacingAndGlyphs">x: CIE31</text>
<text x="1320.0" y="1082.8" font-size="17.8" fill="#f2f2f2" textLength="51.4" lengthAdjust="spacingAndGlyphs">0.2692</text>
<text x="1418.5" y="1082.8" font-size="17.8" fill="#f2f2f2" textLength="51.4" lengthAdjust="spacingAndGlyphs">0.3095</text>
<text x="1507.5" y="1082.8" font-size="17.8" fill="#f2f2f2" textLength="51.4" lengthAdjust="spacingAndGlyphs">0.3089</text>
<text x="1596.3" y="1082.8" font-size="17.8" fill="#f2f2f2" textLength="51.4" lengthAdjust="spacingAndGlyphs">0.3093</text>
<text x="1685.2" y="1082.8" font-size="17.8" fill="#f2f2f2" textLength="51.4" lengthAdjust="spacingAndGlyphs">0.3102</text>
<text x="1774.1" y="1082.8" font-size="17.8" fill="#f2f2f2" textLength="51.4" lengthAdjust="spacingAndGlyphs">0.3098</text>
<text x="1863.2" y="1082.8" font-size="17.8" fill="#f2f2f2" textLength="51.4" lengthAdjust="spacingAndGlyphs">0.3108</text>
<text x="1952.2" y="1082.8" font-size="17.8" fill="#f2f2f2" textLength="51.4" lengthAdjust="spacingAndGlyphs">0.3100</text>
<text x="2041.1" y="1082.8" font-size="17.8" fill="#f2f2f2" textLength="51.4" lengthAdjust="spacingAndGlyphs">0.3105</text>
<text x="2130.0" y="1082.8" font-size="17.8" fill="#f2f2f2" textLength="51.4" lengthAdjust="spacingAndGlyphs">0.3102</text>
<text x="2219.0" y="1082.8" font-size="17.8" fill="#f2f2f2" textLength="51.4" lengthAdjust="spacingAndGlyphs">0.3101</text>
<rect x="1151" y="1090.95" width="1153" height="31.45" fill="#878787"/>
<text x="1163.7" y="1114.2" font-size="17.8" fill="#e6e6e6" font-weight="bold" textLength="66.7" lengthAdjust="spacingAndGlyphs">y: CIE31</text>
<text x="1320.0" y="1114.2" font-size="17.8" fill="#e6e6e6" textLength="51.4" lengthAdjust="spacingAndGlyphs">0.2733</text>
<text x="1418.5" y="1114.2" font-size="17.8" fill="#e6e6e6" textLength="51.4" lengthAdjust="spacingAndGlyphs">0.3286</text>
<text x="1507.5" y="1114.2" font-size="17.8" fill="#e6e6e6" textLength="51.4" lengthAdjust="spacingAndGlyphs">0.3283</text>
<text x="1596.3" y="1114.2" font-size="17.8" fill="#e6e6e6" textLength="51.4" lengthAdjust="spacingAndGlyphs">0.3270</text>
<text x="1685.2" y="1114.2" font-size="17.8" fill="#e6e6e6" textLength="51.4" lengthAdjust="spacingAndGlyphs">0.3299</text>
<text x="1774.1" y="1114.2" font-size="17.8" fill="#e6e6e6" textLength="51.4" lengthAdjust="spacingAndGlyphs">0.3295</text>
<text x="1863.2" y="1114.2" font-size="17.8" fill="#e6e6e6" textLength="51.4" lengthAdjust="spacingAndGlyphs">0.3300</text>
<text x="1952.2" y="1114.2" font-size="17.8" fill="#e6e6e6" textLength="51.4" lengthAdjust="spacingAndGlyphs">0.3281</text>
<text x="2041.1" y="1114.2" font-size="17.8" fill="#e6e6e6" textLength="51.4" lengthAdjust="spacingAndGlyphs">0.3294</text>
<text x="2130.0" y="1114.2" font-size="17.8" fill="#e6e6e6" textLength="51.4" lengthAdjust="spacingAndGlyphs">0.3295</text>
<text x="2219.0" y="1114.2" font-size="17.8" fill="#e6e6e6" textLength="51.4" lengthAdjust="spacingAndGlyphs">0.3290</text>
<rect x="1151" y="1122.40" width="1153" height="31.45" fill="#3c3c3c"/>
<text x="1163.7" y="1145.7" font-size="17.8" fill="#f2f2f2" font-weight="bold" textLength="11.3" lengthAdjust="spacingAndGlyphs">Y</text>
<text x="1320.0" y="1145.7" font-size="17.8" fill="#f2f2f2" textLength="51.4" lengthAdjust="spacingAndGlyphs">0.4313</text>
<text x="1418.5" y="1145.7" font-size="17.8" fill="#f2f2f2" textLength="51.4" lengthAdjust="spacingAndGlyphs">3.9749</text>
<text x="1507.5" y="1145.7" font-size="17.8" fill="#f2f2f2" textLength="59.6" lengthAdjust="spacingAndGlyphs">11.8008</text>
<text x="1596.3" y="1145.7" font-size="17.8" fill="#f2f2f2" textLength="60.8" lengthAdjust="spacingAndGlyphs">25.2863</text>
<text x="1685.2" y="1145.7" font-size="17.8" fill="#f2f2f2" textLength="60.8" lengthAdjust="spacingAndGlyphs">46.4455</text>
<text x="1774.1" y="1145.7" font-size="17.8" fill="#f2f2f2" textLength="60.8" lengthAdjust="spacingAndGlyphs">75.9584</text>
<text x="1863.2" y="1145.7" font-size="17.8" fill="#f2f2f2" textLength="68.9" lengthAdjust="spacingAndGlyphs">112.6682</text>
<text x="1952.2" y="1145.7" font-size="17.8" fill="#f2f2f2" textLength="70.2" lengthAdjust="spacingAndGlyphs">155.6165</text>
<text x="2041.1" y="1145.7" font-size="17.8" fill="#f2f2f2" textLength="70.2" lengthAdjust="spacingAndGlyphs">213.3852</text>
<text x="2130.0" y="1145.7" font-size="17.8" fill="#f2f2f2" textLength="70.2" lengthAdjust="spacingAndGlyphs">278.1668</text>
<text x="2219.0" y="1145.7" font-size="17.8" fill="#f2f2f2" textLength="70.2" lengthAdjust="spacingAndGlyphs">351.7163</text>
<rect x="1151" y="1153.85" width="1153" height="31.45" fill="#878787"/>
<text x="1163.7" y="1177.1" font-size="17.8" fill="#e6e6e6" font-weight="bold" textLength="66.1" lengthAdjust="spacingAndGlyphs">Target Y</text>
<text x="1320.0" y="1177.1" font-size="17.8" fill="#e6e6e6" textLength="51.4" lengthAdjust="spacingAndGlyphs">0.0000</text>
<text x="1418.5" y="1177.1" font-size="17.8" fill="#e6e6e6" textLength="51.4" lengthAdjust="spacingAndGlyphs">3.6332</text>
<text x="1507.5" y="1177.1" font-size="17.8" fill="#e6e6e6" textLength="59.6" lengthAdjust="spacingAndGlyphs">11.6435</text>
<text x="1596.3" y="1177.1" font-size="17.8" fill="#e6e6e6" textLength="60.8" lengthAdjust="spacingAndGlyphs">25.4192</text>
<text x="1685.2" y="1177.1" font-size="17.8" fill="#e6e6e6" textLength="60.8" lengthAdjust="spacingAndGlyphs">46.7320</text>
<text x="1774.1" y="1177.1" font-size="17.8" fill="#e6e6e6" textLength="60.8" lengthAdjust="spacingAndGlyphs">75.9217</text>
<text x="1863.2" y="1177.1" font-size="17.8" fill="#e6e6e6" textLength="68.9" lengthAdjust="spacingAndGlyphs">112.0381</text>
<text x="1952.2" y="1177.1" font-size="17.8" fill="#e6e6e6" textLength="70.2" lengthAdjust="spacingAndGlyphs">156.5845</text>
<text x="2041.1" y="1177.1" font-size="17.8" fill="#e6e6e6" textLength="70.2" lengthAdjust="spacingAndGlyphs">212.3759</text>
<text x="2130.0" y="1177.1" font-size="17.8" fill="#e6e6e6" textLength="70.2" lengthAdjust="spacingAndGlyphs">278.3124</text>
<text x="2219.0" y="1177.1" font-size="17.8" fill="#e6e6e6" textLength="70.2" lengthAdjust="spacingAndGlyphs">351.7163</text>
<rect x="1151" y="1185.30" width="1153" height="31.45" fill="#3c3c3c"/>
<text x="1163.7" y="1208.6" font-size="17.8" fill="#f2f2f2" font-weight="bold" textLength="133.4" lengthAdjust="spacingAndGlyphs">Gamma Log/Log</text>
<text x="1320.0" y="1208.6" font-size="17.8" fill="#f2f2f2" textLength="51.4" lengthAdjust="spacingAndGlyphs">1.2778</text>
<text x="1418.5" y="1208.6" font-size="17.8" fill="#f2f2f2" textLength="51.4" lengthAdjust="spacingAndGlyphs">1.9634</text>
<text x="1507.5" y="1208.6" font-size="17.8" fill="#f2f2f2" textLength="51.4" lengthAdjust="spacingAndGlyphs">2.1092</text>
<text x="1596.3" y="1208.6" font-size="17.8" fill="#f2f2f2" textLength="51.4" lengthAdjust="spacingAndGlyphs">2.1747</text>
<text x="1685.2" y="1208.6" font-size="17.8" fill="#f2f2f2" textLength="51.4" lengthAdjust="spacingAndGlyphs">2.2095</text>
<text x="1774.1" y="1208.6" font-size="17.8" fill="#f2f2f2" textLength="51.4" lengthAdjust="spacingAndGlyphs">2.2237</text>
<text x="1863.2" y="1208.6" font-size="17.8" fill="#f2f2f2" textLength="51.4" lengthAdjust="spacingAndGlyphs">2.2285</text>
<text x="1952.2" y="1208.6" font-size="17.8" fill="#f2f2f2" textLength="51.4" lengthAdjust="spacingAndGlyphs">2.2684</text>
<text x="2041.1" y="1208.6" font-size="17.8" fill="#f2f2f2" textLength="51.4" lengthAdjust="spacingAndGlyphs">2.2395</text>
<text x="2130.0" y="1208.6" font-size="17.8" fill="#f2f2f2" textLength="51.4" lengthAdjust="spacingAndGlyphs">2.2736</text>
<text x="2219.0" y="1208.6" font-size="17.8" fill="#f2f2f2" textLength="51.4" lengthAdjust="spacingAndGlyphs">2.2749</text>
<rect x="1151" y="1216.75" width="1153" height="31.45" fill="#878787"/>
<text x="1163.7" y="1240.0" font-size="17.8" fill="#e6e6e6" font-weight="bold" textLength="34.8" lengthAdjust="spacingAndGlyphs">CCT</text>
<text x="1320.0" y="1240.0" font-size="17.8" fill="#e6e6e6" textLength="88.9" lengthAdjust="spacingAndGlyphs">12426.0000</text>
<text x="1418.5" y="1240.0" font-size="17.8" fill="#e6e6e6" textLength="79.5" lengthAdjust="spacingAndGlyphs">6686.0000</text>
<text x="1507.5" y="1240.0" font-size="17.8" fill="#e6e6e6" textLength="79.5" lengthAdjust="spacingAndGlyphs">6721.0000</text>
<text x="1596.3" y="1240.0" font-size="17.8" fill="#e6e6e6" textLength="78.3" lengthAdjust="spacingAndGlyphs">6711.0000</text>
<text x="1685.2" y="1240.0" font-size="17.8" fill="#e6e6e6" textLength="79.5" lengthAdjust="spacingAndGlyphs">6636.0000</text>
<text x="1774.1" y="1240.0" font-size="17.8" fill="#e6e6e6" textLength="79.5" lengthAdjust="spacingAndGlyphs">6661.0000</text>
<text x="1863.2" y="1240.0" font-size="17.8" fill="#e6e6e6" textLength="79.5" lengthAdjust="spacingAndGlyphs">6598.0000</text>
<text x="1952.2" y="1240.0" font-size="17.8" fill="#e6e6e6" textLength="79.5" lengthAdjust="spacingAndGlyphs">6658.0000</text>
<text x="2041.1" y="1240.0" font-size="17.8" fill="#e6e6e6" textLength="79.5" lengthAdjust="spacingAndGlyphs">6623.0000</text>
<text x="2130.0" y="1240.0" font-size="17.8" fill="#e6e6e6" textLength="79.5" lengthAdjust="spacingAndGlyphs">6639.0000</text>
<text x="2219.0" y="1240.0" font-size="17.8" fill="#e6e6e6" textLength="79.5" lengthAdjust="spacingAndGlyphs">6647.0000</text>
<rect x="1151" y="1248.20" width="1153" height="31.45" fill="#3c3c3c"/>
<text x="1163.7" y="1271.5" font-size="17.8" fill="#f2f2f2" font-weight="bold" textLength="65.7" lengthAdjust="spacingAndGlyphs">ΔE 2000</text>
<text x="1320.0" y="1271.5" font-size="17.8" fill="#f2f2f2" textLength="51.4" lengthAdjust="spacingAndGlyphs">1.2135</text>
<text x="1418.5" y="1271.5" font-size="17.8" fill="#f2f2f2" textLength="51.4" lengthAdjust="spacingAndGlyphs">0.7206</text>
<text x="1507.5" y="1271.5" font-size="17.8" fill="#f2f2f2" textLength="51.4" lengthAdjust="spacingAndGlyphs">0.8731</text>
<text x="1596.3" y="1271.5" font-size="17.8" fill="#f2f2f2" textLength="51.4" lengthAdjust="spacingAndGlyphs">0.7633</text>
<text x="1685.2" y="1271.5" font-size="17.8" fill="#f2f2f2" textLength="51.4" lengthAdjust="spacingAndGlyphs">1.3646</text>
<text x="1774.1" y="1271.5" font-size="17.8" fill="#f2f2f2" textLength="51.4" lengthAdjust="spacingAndGlyphs">1.5820</text>
<text x="1863.2" y="1271.5" font-size="17.8" fill="#f2f2f2" textLength="51.4" lengthAdjust="spacingAndGlyphs">1.4986</text>
<text x="1952.2" y="1271.5" font-size="17.8" fill="#f2f2f2" textLength="51.4" lengthAdjust="spacingAndGlyphs">1.2360</text>
<text x="2041.1" y="1271.5" font-size="17.8" fill="#f2f2f2" textLength="51.4" lengthAdjust="spacingAndGlyphs">1.7381</text>
<text x="2130.0" y="1271.5" font-size="17.8" fill="#f2f2f2" textLength="51.4" lengthAdjust="spacingAndGlyphs">2.1070</text>
<text x="2219.0" y="1271.5" font-size="17.8" fill="#f2f2f2" textLength="51.4" lengthAdjust="spacingAndGlyphs">2.0439</text>
<rect x="1151" y="1279.65" width="1153" height="31.45" fill="#878787"/>
<text x="1163.7" y="1303.0" font-size="17.8" fill="#e6e6e6" font-weight="bold" textLength="54.4" lengthAdjust="spacingAndGlyphs">ΔE ITP</text>
<text x="1320.0" y="1303.0" font-size="17.8" fill="#e6e6e6" textLength="60.8" lengthAdjust="spacingAndGlyphs">81.3244</text>
<text x="1418.5" y="1303.0" font-size="17.8" fill="#e6e6e6" textLength="51.4" lengthAdjust="spacingAndGlyphs">4.5496</text>
<text x="1507.5" y="1303.0" font-size="17.8" fill="#e6e6e6" textLength="51.4" lengthAdjust="spacingAndGlyphs">2.0404</text>
<text x="1596.3" y="1303.0" font-size="17.8" fill="#e6e6e6" textLength="51.4" lengthAdjust="spacingAndGlyphs">1.7390</text>
<text x="1685.2" y="1303.0" font-size="17.8" fill="#e6e6e6" textLength="51.4" lengthAdjust="spacingAndGlyphs">1.8645</text>
<text x="1774.1" y="1303.0" font-size="17.8" fill="#e6e6e6" textLength="51.4" lengthAdjust="spacingAndGlyphs">1.9923</text>
<text x="1863.2" y="1303.0" font-size="17.8" fill="#e6e6e6" textLength="51.4" lengthAdjust="spacingAndGlyphs">1.5584</text>
<text x="1952.2" y="1303.0" font-size="17.8" fill="#e6e6e6" textLength="51.4" lengthAdjust="spacingAndGlyphs">1.6763</text>
<text x="2041.1" y="1303.0" font-size="17.8" fill="#e6e6e6" textLength="51.4" lengthAdjust="spacingAndGlyphs">1.6666</text>
<text x="2130.0" y="1303.0" font-size="17.8" fill="#e6e6e6" textLength="51.4" lengthAdjust="spacingAndGlyphs">1.8700</text>
<text x="2219.0" y="1303.0" font-size="17.8" fill="#e6e6e6" textLength="51.4" lengthAdjust="spacingAndGlyphs">1.8144</text>
<text x="1364.4" y="1049.4" font-size="17.8" fill="#f0f0f0" text-anchor="middle" textLength="9.4" lengthAdjust="spacingAndGlyphs">0</text>
<text x="1458.5" y="1049.4" font-size="17.8" fill="#f0f0f0" text-anchor="middle" textLength="18.7" lengthAdjust="spacingAndGlyphs">10</text>
<text x="1547.5" y="1049.4" font-size="17.8" fill="#f0f0f0" text-anchor="middle" textLength="18.7" lengthAdjust="spacingAndGlyphs">20</text>
<text x="1636.5" y="1049.4" font-size="17.8" fill="#f0f0f0" text-anchor="middle" textLength="18.7" lengthAdjust="spacingAndGlyphs">30</text>
<text x="1725.4" y="1049.4" font-size="17.8" fill="#f0f0f0" text-anchor="middle" textLength="18.7" lengthAdjust="spacingAndGlyphs">40</text>
<text x="1814.4" y="1049.4" font-size="17.8" fill="#f0f0f0" text-anchor="middle" textLength="18.7" lengthAdjust="spacingAndGlyphs">50</text>
<text x="1903.4" y="1049.4" font-size="17.8" fill="#f0f0f0" text-anchor="middle" textLength="18.7" lengthAdjust="spacingAndGlyphs">60</text>
<text x="1992.4" y="1049.4" font-size="17.8" fill="#f0f0f0" text-anchor="middle" textLength="18.7" lengthAdjust="spacingAndGlyphs">70</text>
<text x="2081.4" y="1049.4" font-size="17.8" fill="#f0f0f0" text-anchor="middle" textLength="18.7" lengthAdjust="spacingAndGlyphs">80</text>
<text x="2170.3" y="1049.4" font-size="17.8" fill="#f0f0f0" text-anchor="middle" textLength="18.7" lengthAdjust="spacingAndGlyphs">90</text>
<text x="2259.3" y="1049.4" font-size="17.8" fill="#f0f0f0" text-anchor="middle" textLength="28.1" lengthAdjust="spacingAndGlyphs">100</text>
<line x1="2304" y1="1026" x2="2304" y2="1310" stroke="#1a1a1a" stroke-width="1.5"/>
<rect x="302.0" y="1435.5" width="157" height="90.5" rx="7" fill="url(#gBb)"/>
<rect x="309.5" y="1442.5" width="142.5" height="53.5" rx="6" fill="rgb(0,0,0)" stroke="rgba(0,0,0,0.35)" stroke-width="1.5"/>
<text x="380.5" y="1520.0" font-size="17" fill="#2e2e2e" text-anchor="middle" font-weight="bold">0</text>
<rect x="463.1" y="1435.5" width="157" height="90.5" rx="7" fill="url(#gBb)"/>
<rect x="470.6" y="1442.5" width="142.5" height="53.5" rx="6" fill="rgb(27,27,27)" stroke="rgba(0,0,0,0.35)" stroke-width="1.5"/>
<text x="541.6" y="1520.0" font-size="17" fill="#2e2e2e" text-anchor="middle" font-weight="bold">10</text>
<rect x="624.2" y="1435.5" width="157" height="90.5" rx="7" fill="url(#gBb)"/>
<rect x="631.7" y="1442.5" width="142.5" height="53.5" rx="6" fill="rgb(51,51,51)" stroke="rgba(0,0,0,0.35)" stroke-width="1.5"/>
<text x="702.7" y="1520.0" font-size="17" fill="#2e2e2e" text-anchor="middle" font-weight="bold">20</text>
<rect x="785.3" y="1435.5" width="157" height="90.5" rx="7" fill="url(#gBb)"/>
<rect x="792.8" y="1442.5" width="142.5" height="53.5" rx="6" fill="rgb(77,77,77)" stroke="rgba(0,0,0,0.35)" stroke-width="1.5"/>
<text x="863.8" y="1520.0" font-size="17" fill="#2e2e2e" text-anchor="middle" font-weight="bold">30</text>
<rect x="946.4" y="1435.5" width="157" height="90.5" rx="7" fill="url(#gBb)"/>
<rect x="953.9" y="1442.5" width="142.5" height="53.5" rx="6" fill="rgb(102,102,102)" stroke="rgba(0,0,0,0.35)" stroke-width="1.5"/>
<text x="1024.9" y="1520.0" font-size="17" fill="#2e2e2e" text-anchor="middle" font-weight="bold">40</text>
<rect x="1107.5" y="1435.5" width="157" height="90.5" rx="7" fill="url(#gBb)"/>
<rect x="1115.0" y="1442.5" width="142.5" height="53.5" rx="6" fill="rgb(128,128,128)" stroke="rgba(0,0,0,0.35)" stroke-width="1.5"/>
<text x="1186.0" y="1520.0" font-size="17" fill="#2e2e2e" text-anchor="middle" font-weight="bold">50</text>
<rect x="1268.6" y="1435.5" width="157" height="90.5" rx="7" fill="url(#gBb)"/>
<rect x="1276.1" y="1442.5" width="142.5" height="53.5" rx="6" fill="rgb(153,153,153)" stroke="rgba(0,0,0,0.35)" stroke-width="1.5"/>
<text x="1347.1" y="1520.0" font-size="17" fill="#2e2e2e" text-anchor="middle" font-weight="bold">60</text>
<rect x="1429.7" y="1435.5" width="157" height="90.5" rx="7" fill="url(#gBb)"/>
<rect x="1437.2" y="1442.5" width="142.5" height="53.5" rx="6" fill="rgb(179,179,179)" stroke="rgba(0,0,0,0.35)" stroke-width="1.5"/>
<text x="1508.2" y="1520.0" font-size="17" fill="#2e2e2e" text-anchor="middle" font-weight="bold">70</text>
<rect x="1590.8" y="1435.5" width="157" height="90.5" rx="7" fill="url(#gBb)"/>
<rect x="1598.3" y="1442.5" width="142.5" height="53.5" rx="6" fill="rgb(204,204,204)" stroke="rgba(0,0,0,0.35)" stroke-width="1.5"/>
<text x="1669.3" y="1520.0" font-size="17" fill="#2e2e2e" text-anchor="middle" font-weight="bold">80</text>
<rect x="1751.9" y="1435.5" width="157" height="90.5" rx="7" fill="url(#gBb)"/>
<rect x="1759.4" y="1442.5" width="142.5" height="53.5" rx="6" fill="rgb(230,230,230)" stroke="rgba(0,0,0,0.35)" stroke-width="1.5"/>
<text x="1830.4" y="1520.0" font-size="17" fill="#2e2e2e" text-anchor="middle" font-weight="bold">90</text>
<rect x="1913.0" y="1435.5" width="157" height="90.5" rx="7" fill="url(#gSelB)"/>
<rect x="1920.0" y="1442.5" width="143" height="53.5" rx="7" fill="#fff" stroke="#ddd" stroke-width="1.5"/>
<text x="1991.5" y="1520.0" font-size="17" fill="#fff" text-anchor="middle" font-weight="bold">100</text>
<rect x="2075.7" y="1435.5" width="72" height="90.5" rx="6" fill="url(#gCb2)"/>
<rect x="2075.7" y="1435.5" width="72" height="26.5" rx="6" fill="url(#gCb)"/>
<line x1="2076" y1="1462" x2="2147" y2="1462" stroke="#5a5a5a" stroke-width="1.5"/>
<circle cx="2111.3" cy="1448.3" r="11.5" fill="url(#gIc)"/>
<path d="M2104 1451.5 L2118.5 1451.5 L2111.3 1444.5 Z" fill="#222"/>
<rect x="2090.5" y="1472.5" width="43" height="44" rx="8" fill="#a0a0a0" stroke="#262626" stroke-width="3.5"/>
<rect x="2101.2" y="1484.3" width="20" height="20" fill="#000"/>
<rect x="2149" y="1435.5" width="420" height="90.5" rx="6" fill="url(#gCb2)"/>
<rect x="2149" y="1435.5" width="420" height="44.5" rx="6" fill="url(#gCb)"/>
<line x1="2218.8" y1="1436" x2="2218.8" y2="1480" stroke="#5a5a5a" stroke-width="1.3"/>
<line x1="2287" y1="1436" x2="2287" y2="1480" stroke="#5a5a5a" stroke-width="1.3"/>
<line x1="2353.5" y1="1436" x2="2353.5" y2="1480" stroke="#5a5a5a" stroke-width="1.3"/>
<line x1="2420" y1="1436" x2="2420" y2="1480" stroke="#5a5a5a" stroke-width="1.3"/>
<line x1="2488" y1="1436" x2="2488" y2="1480" stroke="#5a5a5a" stroke-width="1.3"/>
<line x1="2149" y1="1480" x2="2560" y2="1480" stroke="#5a5a5a" stroke-width="1.5"/>
<line x1="2353.5" y1="1480" x2="2353.5" y2="1526" stroke="#5a5a5a" stroke-width="1.3"/>
<circle cx="2184" cy="1458" r="13" fill="url(#gIc)" opacity="0.55"/>
<circle cx="2253" cy="1458" r="13" fill="url(#gIc)" opacity="0.55"/>
<circle cx="2320" cy="1458" r="13" fill="url(#gIc)" opacity="0.55"/>
<circle cx="2387" cy="1458" r="13" fill="url(#gIc)" opacity="0.55"/>
<circle cx="2454" cy="1458" r="13" fill="url(#gIc)" opacity="0.55"/>
<circle cx="2522" cy="1458" r="13" fill="url(#gIc)" opacity="0.55"/>
<circle cx="2194.7" cy="1502" r="13" fill="url(#gIc)" opacity="0.55"/>
<circle cx="2516.4" cy="1502" r="13" fill="url(#gIc)" opacity="0.55"/>
<path d="M2511 1497 L2516 1502 L2511 1507 M2517 1497 L2522 1502 L2517 1507" fill="none" stroke="#333" stroke-width="2.5"/>
<path d="M2198 1496 L2192 1502 L2198 1508" fill="none" stroke="#333" stroke-width="2.5"/>
<path d="M2249 1452 L2259 1458 L2249 1464 Z" fill="#333"/>
<rect x="2181" y="1454" width="9" height="9" fill="#222"/>
<text x="2235.0" y="1514.5" font-size="32.5" fill="#2c2c2c" textLength="76.0" lengthAdjust="spacingAndGlyphs">Back</text>
<text x="2396.0" y="1514.5" font-size="32.5" fill="#2c2c2c" textLength="76.0" lengthAdjust="spacingAndGlyphs">Next</text>
<path d="M2173.6 1444.1 L2232.9 1455.2 L2226.9 1486.3 L2263 1491.4 L2206.8 1511.5 L2178.6 1489.4 Z" fill="none" stroke="#e8e8e8" stroke-opacity="0.6" stroke-width="6.5" stroke-linejoin="round"/>
<path d="M2173.6 1444.1 L2232.9 1455.2 L2226.9 1486.3 L2263 1491.4 L2206.8 1511.5 L2178.6 1489.4 Z" fill="none" stroke="#b0323c" stroke-opacity="0.8" stroke-width="3.8" stroke-linejoin="round"/>
<path d="M2188.7 1463.2 L2202.7 1480.3 L2232.9 1445.1" fill="none" stroke="#e0e0e0" stroke-opacity="0.7" stroke-width="8.5" stroke-linejoin="miter"/>
<path d="M2188.7 1463.2 L2202.7 1480.3 L2232.9 1445.1" fill="none" stroke="#404040" stroke-opacity="0.9" stroke-width="5.5" stroke-linejoin="miter"/>
<text x="2234.0" y="1483.0" font-size="33" fill="#9c2630" font-weight="bold" textLength="196.0" lengthAdjust="spacingAndGlyphs" fill-opacity="0.82" stroke="#e6e6e6" stroke-opacity="0.8" stroke-width="1.6" paint-order="stroke">NOTEBOOK</text>
<text x="2432.0" y="1483.0" font-size="33" fill="#444" font-weight="bold" textLength="117.5" lengthAdjust="spacingAndGlyphs" fill-opacity="0.85" stroke="#e6e6e6" stroke-opacity="0.8" stroke-width="1.6" paint-order="stroke">CHECK</text>
<rect x="2551" y="86" width="9" height="1442" fill="url(#gRs)"/>
</svg></body></html>
